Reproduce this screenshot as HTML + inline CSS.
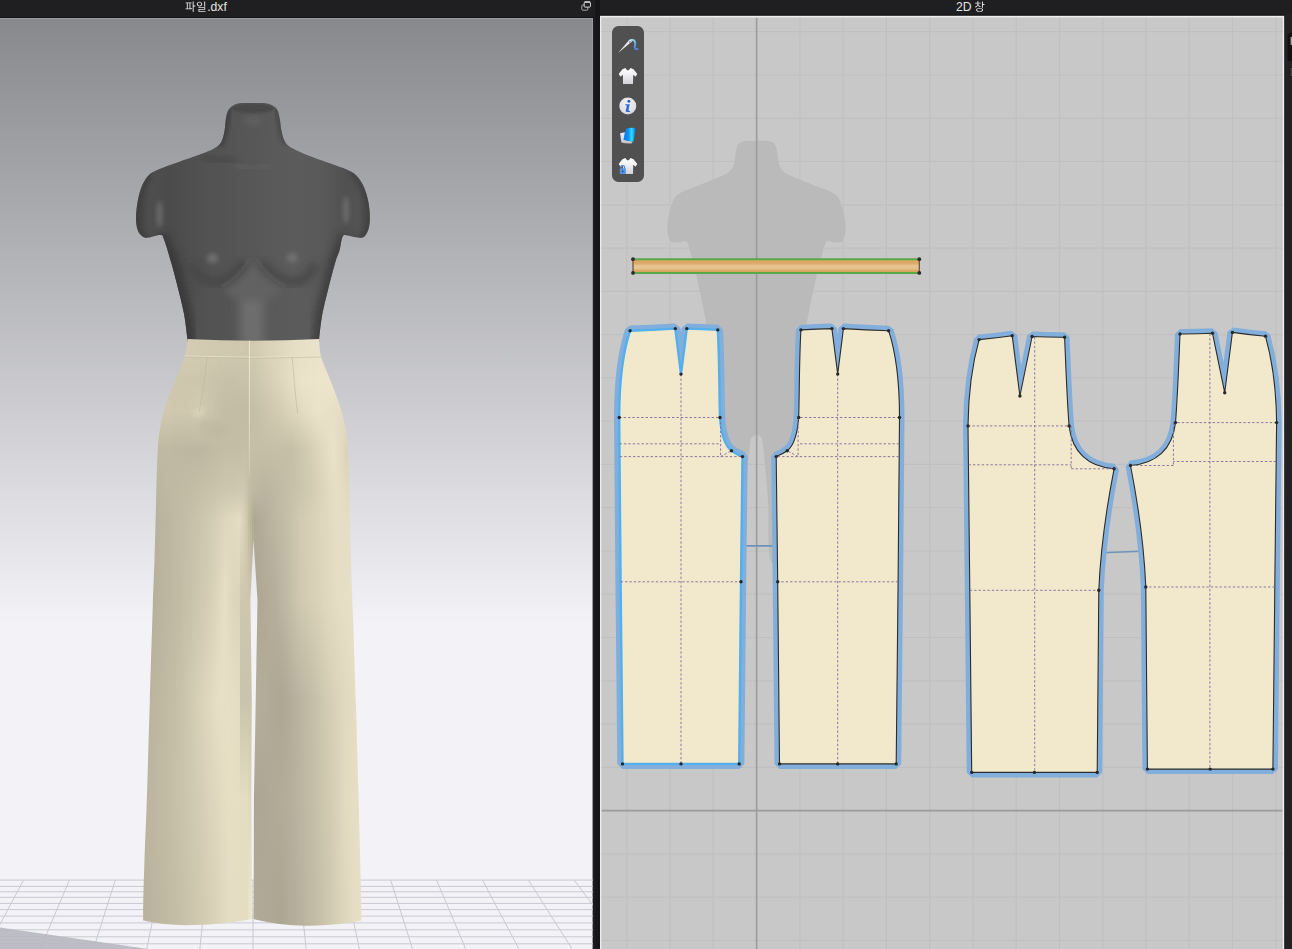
<!DOCTYPE html>
<html><head><meta charset="utf-8"><title>CLO</title>
<style>
html,body{margin:0;padding:0;background:#1f1f21;width:1292px;height:949px;overflow:hidden}
svg{position:absolute;left:0;top:0;display:block}
text{font-family:"Liberation Sans",sans-serif}
</style></head><body>
<svg width="1292" height="949" viewBox="0 0 1292 949">
<defs>
<linearGradient id="bg3d" x1="0" y1="18" x2="0" y2="949" gradientUnits="userSpaceOnUse">
<stop offset="0" stop-color="#88898d"/>
<stop offset="0.652" stop-color="#f2f2f7"/>
<stop offset="1" stop-color="#f2f2f7"/>
</linearGradient>
<clipPath id="clip3d"><rect x="0" y="18" width="593" height="931"/></clipPath>
<clipPath id="clip2d"><rect x="601.6" y="17.8" width="680.8" height="932"/></clipPath>
<filter id="b1" x="-20%" y="-20%" width="140%" height="140%"><feGaussianBlur stdDeviation="1"/></filter>
<filter id="b2" x="-30%" y="-30%" width="160%" height="160%"><feGaussianBlur stdDeviation="2"/></filter>
<filter id="b3" x="-30%" y="-30%" width="160%" height="160%"><feGaussianBlur stdDeviation="3.5"/></filter>
<filter id="b6" x="-50%" y="-50%" width="200%" height="200%"><feGaussianBlur stdDeviation="6"/></filter>
<filter id="b10" x="-50%" y="-50%" width="200%" height="200%"><feGaussianBlur stdDeviation="10"/></filter>
</defs>
<rect x="0" y="0" width="1292" height="949" fill="#1f1f21"/><rect x="0" y="17" width="594" height="1" fill="#121214"/><rect x="0" y="18" width="593" height="931" fill="url(#bg3d)"/><path d="M0,18.5H592.5V949" fill="none" stroke="#9b9ca1" stroke-width="1"/><rect x="599" y="14.6" width="686" height="1.2" fill="#121214"/><rect x="600" y="15.8" width="684.4" height="934" fill="#ededef"/><rect x="601" y="17.2" width="682" height="932" fill="#dadada"/><rect x="601.6" y="17.8" width="680.8" height="932" fill="#c8c8c8"/><path transform="translate(185.00,11.00) scale(0.01160,-0.01160)" d="M49 146C208 146 422 149 611 180L606 241C561 235 514 231 467 228V662H565V730H61V662H158V217L39 216ZM239 662H387V223L239 218ZM662 827V-78H745V396H893V465H745V827Z" fill="#e4e4e4"/><path transform="translate(196.00,11.00) scale(0.01160,-0.01160)" d="M304 794C169 794 70 711 70 593C70 475 169 393 304 393C439 393 537 475 537 593C537 711 439 794 304 794ZM304 725C392 725 457 671 457 593C457 515 392 461 304 461C216 461 151 515 151 593C151 671 216 725 304 725ZM708 827V364H791V827ZM209 1V-66H822V1H289V100H791V319H206V253H709V162H209Z" fill="#e4e4e4"/><text x="207.2" y="11" font-size="12.2" fill="#e4e4e4">.dxf</text><text x="956" y="11" font-size="12.2" fill="#e4e4e4">2D</text><path transform="translate(974.20,11.00) scale(0.01160,-0.01160)" d="M464 250C278 250 166 191 166 87C166 -16 278 -75 464 -75C649 -75 760 -16 760 87C760 191 649 250 464 250ZM464 185C598 185 679 150 679 87C679 25 598 -11 464 -11C329 -11 248 25 248 87C248 150 329 185 464 185ZM276 831V717H75V650H276V632C276 510 185 402 51 360L92 295C198 331 280 406 318 503C358 417 437 350 540 318L579 384C446 423 358 522 358 632V650H558V717H359V831ZM669 827V273H752V524H885V593H752V827Z" fill="#e4e4e4"/><g fill="none" stroke-width="1"><rect x="581.8" y="5" width="6" height="5.2" rx="0.7" stroke="#a6a6a6"/><rect x="584.2" y="2.1" width="6.2" height="5" rx="0.7" fill="#1f1f21" stroke="#d6d6d6"/><path d="M584.6,2H590" stroke="#dadada" stroke-width="1.4"/></g><g clip-path="url(#clip3d)"><g stroke="#c9c9d1" stroke-width="1" fill="none"><path d="M0,880.1H593"/><path d="M0,886.4H593"/><path d="M0,891.8H593"/><path d="M0,897.3H593"/><path d="M0,903.4H593"/><path d="M0,909.6H593"/><path d="M0,916.1H593"/><path d="M0,922.9H593"/><path d="M0,929.8H593"/><path d="M0,936.8H593"/><path d="M0,943.8H593"/><path d="M-114.2,880.1L-177.7,955"/><path d="M-68.3,880.1L-123.8,955"/><path d="M-22.4,880.1L-70.0,955"/><path d="M23.5,880.1L-16.2,955"/><path d="M69.4,880.1L37.7,955"/><path d="M115.3,880.1L91.5,955"/><path d="M161.2,880.1L145.3,955"/><path d="M207.1,880.1L199.2,955"/><path d="M253.0,880.1L253.0,955"/><path d="M298.9,880.1L306.8,955"/><path d="M344.8,880.1L360.7,955"/><path d="M390.7,880.1L414.5,955"/><path d="M436.6,880.1L468.3,955"/><path d="M482.5,880.1L522.2,955"/><path d="M528.4,880.1L576.0,955"/><path d="M574.3,880.1L629.8,955"/><path d="M620.2,880.1L683.7,955"/></g><path d="M0,927.5L148.6,949L0,949Z" fill="#b9b9c1" opacity="0.93"/></g><g clip-path="url(#clip3d)"><clipPath id="torsoclip"><path d="M187.4,338.7C186.8,334.6 185.6,322.4 184.1,314.3C182.6,306.2 180.6,298.6 178.4,289.9C176.2,281.2 173.5,270.6 171.1,262.3C168.7,254.0 166.0,244.7 164.2,240.1C162.4,235.5 163.2,235.4 160.5,235.0C157.8,234.6 150.9,237.4 147.8,237.6C144.7,237.8 143.6,237.2 141.9,235.9C140.2,234.6 138.7,232.9 137.7,230.0C136.7,227.1 136.0,223.0 136.0,218.2C136.0,213.4 136.7,206.7 137.7,201.3C138.7,196.0 140.1,190.4 141.9,186.1C143.7,181.8 145.9,178.0 148.7,175.2C151.5,172.4 154.0,171.4 158.8,169.3C163.6,167.2 170.3,165.0 177.3,162.5C184.3,160.0 194.7,156.5 200.9,154.1C207.1,151.7 211.0,150.2 214.4,148.2C217.8,146.2 219.5,145.2 221.2,142.3C222.9,139.4 223.8,134.7 224.6,130.5C225.4,126.3 225.4,120.7 226.2,117.0C227.0,113.3 227.6,110.8 229.6,108.5C231.6,106.2 234.2,104.4 238.0,103.5C241.8,102.6 247.7,103.0 252.5,103.0C257.4,103.0 263.1,102.6 267.1,103.5C271.1,104.4 274.3,106.0 276.4,108.5C278.5,111.0 278.9,115.0 279.7,118.7C280.5,122.4 280.5,126.7 281.4,130.5C282.2,134.3 283.0,138.5 284.8,141.4C286.6,144.3 288.0,145.7 292.4,148.2C296.8,150.7 303.9,153.8 310.9,156.6C317.9,159.4 327.9,162.5 334.6,165.0C341.4,167.5 347.0,169.1 351.4,171.8C355.8,174.5 358.2,177.3 360.7,181.1C363.2,184.9 365.1,189.5 366.6,194.6C368.1,199.7 369.2,206.1 369.6,211.4C370.0,216.7 369.9,222.5 369.1,226.6C368.3,230.7 366.7,234.1 364.9,235.9C363.1,237.7 361.0,237.7 358.2,237.6C355.4,237.5 350.6,235.6 348.0,235.4C345.4,235.2 344.0,234.3 342.6,236.7C341.2,239.1 340.8,245.7 339.6,250.0C338.4,254.3 337.2,255.7 335.3,262.3C333.4,268.9 330.2,281.2 328.0,289.9C325.8,298.6 323.8,306.2 322.3,314.3C320.8,322.4 319.6,334.6 319.1,338.7L319.1,342 L187.4,342Z"/></clipPath><linearGradient id="torsog" x1="136" y1="0" x2="370" y2="0" gradientUnits="userSpaceOnUse"><stop offset="0" stop-color="#424242"/><stop offset="0.06" stop-color="#4e4e4e"/><stop offset="0.14" stop-color="#4b4b4b"/><stop offset="0.3" stop-color="#525252"/><stop offset="0.5" stop-color="#575757"/><stop offset="0.68" stop-color="#5c5c5c"/><stop offset="0.8" stop-color="#595959"/><stop offset="0.9" stop-color="#505050"/><stop offset="0.95" stop-color="#535353"/><stop offset="1" stop-color="#444444"/></linearGradient><path d="M187.4,338.7C186.8,334.6 185.6,322.4 184.1,314.3C182.6,306.2 180.6,298.6 178.4,289.9C176.2,281.2 173.5,270.6 171.1,262.3C168.7,254.0 166.0,244.7 164.2,240.1C162.4,235.5 163.2,235.4 160.5,235.0C157.8,234.6 150.9,237.4 147.8,237.6C144.7,237.8 143.6,237.2 141.9,235.9C140.2,234.6 138.7,232.9 137.7,230.0C136.7,227.1 136.0,223.0 136.0,218.2C136.0,213.4 136.7,206.7 137.7,201.3C138.7,196.0 140.1,190.4 141.9,186.1C143.7,181.8 145.9,178.0 148.7,175.2C151.5,172.4 154.0,171.4 158.8,169.3C163.6,167.2 170.3,165.0 177.3,162.5C184.3,160.0 194.7,156.5 200.9,154.1C207.1,151.7 211.0,150.2 214.4,148.2C217.8,146.2 219.5,145.2 221.2,142.3C222.9,139.4 223.8,134.7 224.6,130.5C225.4,126.3 225.4,120.7 226.2,117.0C227.0,113.3 227.6,110.8 229.6,108.5C231.6,106.2 234.2,104.4 238.0,103.5C241.8,102.6 247.7,103.0 252.5,103.0C257.4,103.0 263.1,102.6 267.1,103.5C271.1,104.4 274.3,106.0 276.4,108.5C278.5,111.0 278.9,115.0 279.7,118.7C280.5,122.4 280.5,126.7 281.4,130.5C282.2,134.3 283.0,138.5 284.8,141.4C286.6,144.3 288.0,145.7 292.4,148.2C296.8,150.7 303.9,153.8 310.9,156.6C317.9,159.4 327.9,162.5 334.6,165.0C341.4,167.5 347.0,169.1 351.4,171.8C355.8,174.5 358.2,177.3 360.7,181.1C363.2,184.9 365.1,189.5 366.6,194.6C368.1,199.7 369.2,206.1 369.6,211.4C370.0,216.7 369.9,222.5 369.1,226.6C368.3,230.7 366.7,234.1 364.9,235.9C363.1,237.7 361.0,237.7 358.2,237.6C355.4,237.5 350.6,235.6 348.0,235.4C345.4,235.2 344.0,234.3 342.6,236.7C341.2,239.1 340.8,245.7 339.6,250.0C338.4,254.3 337.2,255.7 335.3,262.3C333.4,268.9 330.2,281.2 328.0,289.9C325.8,298.6 323.8,306.2 322.3,314.3C320.8,322.4 319.6,334.6 319.1,338.7L319.1,342 L187.4,342Z" fill="url(#torsog)"/><g clip-path="url(#torsoclip)"><path d="M160,236 L171,262 L178.4,290 L184,314 L187.4,345" stroke="#383838" stroke-width="16" fill="none" filter="url(#b3)" opacity="0.85"/><path d="M346,236 L335.3,262 L328,290 L322.3,314 L319,345" stroke="#3c3c3c" stroke-width="14" fill="none" filter="url(#b3)" opacity="0.85"/><path d="M150,174 Q136,196 136,220 Q138,238 150,238" stroke="#3e3e3e" stroke-width="5" fill="none" filter="url(#b2)" opacity="0.8"/><path d="M352,172 Q369,196 370,214 Q369,238 356,238" stroke="#404040" stroke-width="5" fill="none" filter="url(#b2)" opacity="0.8"/><ellipse cx="253" cy="108.5" rx="21" ry="5" fill="#484848" filter="url(#b1)"/><path d="M229,108 L225,132 L220,146" stroke="#414141" stroke-width="6" fill="none" filter="url(#b2)"/><path d="M277,108 L281,132 L286,144" stroke="#474747" stroke-width="5" fill="none" filter="url(#b2)"/><ellipse cx="253" cy="121" rx="9" ry="5" fill="#626262" filter="url(#b3)" opacity="0.9"/><path d="M203,156 Q218,162 236,161" stroke="#474747" stroke-width="6" fill="none" filter="url(#b3)" opacity="0.8"/><path d="M236,166 Q253,170 272,165" stroke="#636363" stroke-width="2.6" fill="none" filter="url(#b2)"/><ellipse cx="159.5" cy="214" rx="3.2" ry="13" fill="#686868" filter="url(#b2)"/><ellipse cx="346" cy="210" rx="3.2" ry="14" fill="#6a6a6a" filter="url(#b2)"/><path d="M253,262 L270,280 L283,290 L268,300 L266,350 L238,350 L237,300 L224,290 L238,280Z" fill="#626262" filter="url(#b3)"/><rect x="243" y="300" width="18" height="50" fill="#6d6d6d" filter="url(#b3)"/><path d="M190,264 Q203,286 221,281 Q236,275 244,262" stroke="#474747" stroke-width="9" fill="none" filter="url(#b3)" opacity="0.95"/><path d="M316,264 Q304,286 287,281 Q271,275 262,262" stroke="#484848" stroke-width="9" fill="none" filter="url(#b3)" opacity="0.95"/><path d="M222,286 Q240,277 250,258" stroke="#646464" stroke-width="1.5" fill="none" filter="url(#b1)" opacity="0.9"/><path d="M286,286 Q268,278 256,258" stroke="#606060" stroke-width="1.5" fill="none" filter="url(#b1)" opacity="0.9"/><ellipse cx="212.6" cy="258.2" rx="5.5" ry="5" fill="#6e6e6e" filter="url(#b2)"/><ellipse cx="292.2" cy="257.8" rx="5.5" ry="5" fill="#707070" filter="url(#b2)"/></g><clipPath id="pantclip"><path d="M187.5,339.0C187.1,341.8 186.5,350.0 184.8,356.0C183.2,362.0 180.0,368.7 177.6,374.8C175.2,380.9 172.8,386.4 170.4,392.7C168.0,399.0 165.2,404.9 163.3,412.4C161.4,419.9 159.9,428.6 158.8,437.5C157.8,446.4 157.4,455.7 157.0,466.1C156.6,476.5 156.5,484.4 156.1,500.0C155.7,515.6 155.1,542.3 154.5,560.0C153.9,577.7 153.6,582.5 152.8,606.0C152.0,629.5 150.8,668.7 149.8,701.0C148.8,733.3 147.7,773.5 146.8,800.0C145.9,826.5 145.1,842.5 144.5,860.0C143.9,877.5 143.4,894.9 143.2,905.0C143.0,915.1 143.2,918.0 143.2,920.6Q168,926 194.4,925 Q225,924.5 252.3,919 L252.3,919 L252,901 L251.3,800 L251.8,701 L250.4,600 L253.4,539.4L257.5,600 L255.7,701 L253.9,800 L253.6,901 L253.4,919Q280,925.5 305.7,925.7 Q337,926 361.3,920.6C361.3,918.0 361.5,915.1 361.3,905.0C361.1,894.9 360.6,877.5 360.2,860.0C359.8,842.5 359.3,826.5 358.6,800.0C357.9,773.5 356.8,733.3 355.8,701.0C354.8,668.7 353.4,629.5 352.6,606.0C351.8,582.5 351.5,577.7 351.0,560.0C350.5,542.3 350.0,515.6 349.6,500.0C349.2,484.4 349.1,476.5 348.7,466.1C348.2,455.7 347.9,446.1 346.9,437.5C345.8,428.9 344.3,421.7 342.4,414.2C340.4,406.7 337.6,399.3 335.2,392.7C332.8,386.1 330.5,380.9 328.1,374.8C325.7,368.7 322.4,362.0 320.9,356.0C319.4,350.0 319.4,341.8 319.1,339.0Q253,342.5 187.5,339Z"/></clipPath><g clip-path="url(#pantclip)"><g shape-rendering="crispEdges"><linearGradient id="pc0" x1="0" y1="338" x2="0" y2="928" gradientUnits="userSpaceOnUse"><stop offset="0.000" stop-color="#d4cdb4"/><stop offset="0.024" stop-color="#d4cdb4"/><stop offset="0.071" stop-color="#cec7ae"/><stop offset="0.124" stop-color="#d0c9b0"/><stop offset="0.190" stop-color="#c0baa3"/><stop offset="0.258" stop-color="#bcb6a0"/><stop offset="0.308" stop-color="#b7b19c"/><stop offset="0.444" stop-color="#b5ae9a"/><stop offset="0.615" stop-color="#bab49e"/><stop offset="0.783" stop-color="#bbb49e"/><stop offset="0.954" stop-color="#b7b19b"/><stop offset="1.000" stop-color="#b7b19b"/></linearGradient><rect x="140" y="338" width="2" height="590" fill="url(#pc0)"/><linearGradient id="pc1" x1="0" y1="338" x2="0" y2="928" gradientUnits="userSpaceOnUse"><stop offset="0.000" stop-color="#d4cdb4"/><stop offset="0.024" stop-color="#d4cdb4"/><stop offset="0.071" stop-color="#cec7ae"/><stop offset="0.124" stop-color="#d0c9b0"/><stop offset="0.190" stop-color="#c0baa3"/><stop offset="0.258" stop-color="#bcb6a0"/><stop offset="0.308" stop-color="#b7b19c"/><stop offset="0.444" stop-color="#b5ae9a"/><stop offset="0.615" stop-color="#bab49e"/><stop offset="0.783" stop-color="#bbb49e"/><stop offset="0.954" stop-color="#b8b29c"/><stop offset="1.000" stop-color="#b8b29c"/></linearGradient><rect x="142" y="338" width="2" height="590" fill="url(#pc1)"/><linearGradient id="pc2" x1="0" y1="338" x2="0" y2="928" gradientUnits="userSpaceOnUse"><stop offset="0.000" stop-color="#d4cdb4"/><stop offset="0.024" stop-color="#d4cdb4"/><stop offset="0.071" stop-color="#cec7ae"/><stop offset="0.124" stop-color="#d0c9b0"/><stop offset="0.190" stop-color="#c0baa3"/><stop offset="0.258" stop-color="#bcb6a0"/><stop offset="0.308" stop-color="#b7b19c"/><stop offset="0.444" stop-color="#b5ae9a"/><stop offset="0.615" stop-color="#bab49e"/><stop offset="0.783" stop-color="#bbb49e"/><stop offset="0.954" stop-color="#b9b39c"/><stop offset="1.000" stop-color="#b9b39c"/></linearGradient><rect x="144" y="338" width="2" height="590" fill="url(#pc2)"/><linearGradient id="pc3" x1="0" y1="338" x2="0" y2="928" gradientUnits="userSpaceOnUse"><stop offset="0.000" stop-color="#d4cdb4"/><stop offset="0.024" stop-color="#d4cdb4"/><stop offset="0.071" stop-color="#cec7ae"/><stop offset="0.124" stop-color="#d0c9b0"/><stop offset="0.190" stop-color="#c0baa3"/><stop offset="0.258" stop-color="#bcb6a0"/><stop offset="0.308" stop-color="#b7b19c"/><stop offset="0.444" stop-color="#b5ae9a"/><stop offset="0.615" stop-color="#bab49e"/><stop offset="0.783" stop-color="#bcb59f"/><stop offset="0.954" stop-color="#b9b39d"/><stop offset="1.000" stop-color="#b9b39d"/></linearGradient><rect x="146" y="338" width="2" height="590" fill="url(#pc3)"/><linearGradient id="pc4" x1="0" y1="338" x2="0" y2="928" gradientUnits="userSpaceOnUse"><stop offset="0.000" stop-color="#d4cdb4"/><stop offset="0.024" stop-color="#d4cdb4"/><stop offset="0.071" stop-color="#cec7ae"/><stop offset="0.124" stop-color="#d0c9b0"/><stop offset="0.190" stop-color="#c0baa3"/><stop offset="0.258" stop-color="#bcb6a0"/><stop offset="0.308" stop-color="#b7b19c"/><stop offset="0.444" stop-color="#b5ae9a"/><stop offset="0.615" stop-color="#bab49e"/><stop offset="0.783" stop-color="#bcb69f"/><stop offset="0.954" stop-color="#bab49e"/><stop offset="1.000" stop-color="#bab49e"/></linearGradient><rect x="148" y="338" width="2" height="590" fill="url(#pc4)"/><linearGradient id="pc5" x1="0" y1="338" x2="0" y2="928" gradientUnits="userSpaceOnUse"><stop offset="0.000" stop-color="#d4cdb4"/><stop offset="0.024" stop-color="#d4cdb4"/><stop offset="0.071" stop-color="#cec7ae"/><stop offset="0.124" stop-color="#d0c9b0"/><stop offset="0.190" stop-color="#c0baa3"/><stop offset="0.258" stop-color="#bcb6a0"/><stop offset="0.308" stop-color="#b7b19c"/><stop offset="0.444" stop-color="#b5ae9a"/><stop offset="0.615" stop-color="#bbb59f"/><stop offset="0.783" stop-color="#bdb6a0"/><stop offset="0.954" stop-color="#bbb59e"/><stop offset="1.000" stop-color="#bbb59e"/></linearGradient><rect x="150" y="338" width="2" height="590" fill="url(#pc5)"/><linearGradient id="pc6" x1="0" y1="338" x2="0" y2="928" gradientUnits="userSpaceOnUse"><stop offset="0.000" stop-color="#d4cdb4"/><stop offset="0.024" stop-color="#d4cdb4"/><stop offset="0.071" stop-color="#cec7ae"/><stop offset="0.124" stop-color="#d0c9b0"/><stop offset="0.190" stop-color="#c0baa3"/><stop offset="0.258" stop-color="#bcb6a0"/><stop offset="0.308" stop-color="#b7b19c"/><stop offset="0.444" stop-color="#b6af9b"/><stop offset="0.615" stop-color="#bcb6a0"/><stop offset="0.783" stop-color="#beb7a1"/><stop offset="0.954" stop-color="#bcb59f"/><stop offset="1.000" stop-color="#bcb59f"/></linearGradient><rect x="152" y="338" width="2" height="590" fill="url(#pc6)"/><linearGradient id="pc7" x1="0" y1="338" x2="0" y2="928" gradientUnits="userSpaceOnUse"><stop offset="0.000" stop-color="#d4cdb4"/><stop offset="0.024" stop-color="#d4cdb4"/><stop offset="0.071" stop-color="#cec7ae"/><stop offset="0.124" stop-color="#d0c9b0"/><stop offset="0.190" stop-color="#c0baa3"/><stop offset="0.258" stop-color="#bcb6a0"/><stop offset="0.308" stop-color="#b7b19c"/><stop offset="0.444" stop-color="#b7b09c"/><stop offset="0.615" stop-color="#bdb7a0"/><stop offset="0.783" stop-color="#bfb8a1"/><stop offset="0.954" stop-color="#bcb6a0"/><stop offset="1.000" stop-color="#bcb6a0"/></linearGradient><rect x="154" y="338" width="2" height="590" fill="url(#pc7)"/><linearGradient id="pc8" x1="0" y1="338" x2="0" y2="928" gradientUnits="userSpaceOnUse"><stop offset="0.000" stop-color="#d4cdb4"/><stop offset="0.024" stop-color="#d4cdb4"/><stop offset="0.071" stop-color="#cec7ae"/><stop offset="0.124" stop-color="#d0c9b0"/><stop offset="0.190" stop-color="#c0baa3"/><stop offset="0.258" stop-color="#bcb6a0"/><stop offset="0.308" stop-color="#b8b29d"/><stop offset="0.444" stop-color="#b8b19c"/><stop offset="0.615" stop-color="#bdb7a1"/><stop offset="0.783" stop-color="#bfb8a2"/><stop offset="0.954" stop-color="#bdb7a0"/><stop offset="1.000" stop-color="#bdb7a0"/></linearGradient><rect x="156" y="338" width="2" height="590" fill="url(#pc8)"/><linearGradient id="pc9" x1="0" y1="338" x2="0" y2="928" gradientUnits="userSpaceOnUse"><stop offset="0.000" stop-color="#d4cdb4"/><stop offset="0.024" stop-color="#d4cdb4"/><stop offset="0.071" stop-color="#cec7ae"/><stop offset="0.124" stop-color="#d0c9b0"/><stop offset="0.190" stop-color="#bfb9a2"/><stop offset="0.258" stop-color="#bcb6a0"/><stop offset="0.308" stop-color="#b9b39e"/><stop offset="0.444" stop-color="#b9b29d"/><stop offset="0.615" stop-color="#beb8a1"/><stop offset="0.783" stop-color="#c0b9a2"/><stop offset="0.954" stop-color="#beb7a1"/><stop offset="1.000" stop-color="#beb7a1"/></linearGradient><rect x="158" y="338" width="2" height="590" fill="url(#pc9)"/><linearGradient id="pc10" x1="0" y1="338" x2="0" y2="928" gradientUnits="userSpaceOnUse"><stop offset="0.000" stop-color="#d4cdb4"/><stop offset="0.024" stop-color="#d4cdb4"/><stop offset="0.071" stop-color="#cec7ae"/><stop offset="0.124" stop-color="#d0c9b0"/><stop offset="0.190" stop-color="#bfb9a2"/><stop offset="0.258" stop-color="#bdb7a1"/><stop offset="0.308" stop-color="#bab49e"/><stop offset="0.444" stop-color="#bab39e"/><stop offset="0.615" stop-color="#bfb9a2"/><stop offset="0.783" stop-color="#c1baa3"/><stop offset="0.954" stop-color="#bfb8a1"/><stop offset="1.000" stop-color="#bfb8a1"/></linearGradient><rect x="160" y="338" width="2" height="590" fill="url(#pc10)"/><linearGradient id="pc11" x1="0" y1="338" x2="0" y2="928" gradientUnits="userSpaceOnUse"><stop offset="0.000" stop-color="#d4cdb4"/><stop offset="0.024" stop-color="#d4cdb4"/><stop offset="0.071" stop-color="#cec7ae"/><stop offset="0.124" stop-color="#d0c9b0"/><stop offset="0.190" stop-color="#bfb9a2"/><stop offset="0.258" stop-color="#bdb7a1"/><stop offset="0.308" stop-color="#bbb49f"/><stop offset="0.444" stop-color="#bbb49f"/><stop offset="0.615" stop-color="#bfb9a2"/><stop offset="0.783" stop-color="#c2bba4"/><stop offset="0.954" stop-color="#bfb9a2"/><stop offset="1.000" stop-color="#bfb9a2"/></linearGradient><rect x="162" y="338" width="2" height="590" fill="url(#pc11)"/><linearGradient id="pc12" x1="0" y1="338" x2="0" y2="928" gradientUnits="userSpaceOnUse"><stop offset="0.000" stop-color="#d4cdb4"/><stop offset="0.024" stop-color="#d4cdb4"/><stop offset="0.071" stop-color="#cec7ae"/><stop offset="0.124" stop-color="#d0c9b0"/><stop offset="0.190" stop-color="#bfb9a2"/><stop offset="0.258" stop-color="#beb7a1"/><stop offset="0.308" stop-color="#bbb5a0"/><stop offset="0.444" stop-color="#bcb59f"/><stop offset="0.615" stop-color="#c0baa3"/><stop offset="0.783" stop-color="#c2bba4"/><stop offset="0.954" stop-color="#c0b9a3"/><stop offset="1.000" stop-color="#c0b9a3"/></linearGradient><rect x="164" y="338" width="2" height="590" fill="url(#pc12)"/><linearGradient id="pc13" x1="0" y1="338" x2="0" y2="928" gradientUnits="userSpaceOnUse"><stop offset="0.000" stop-color="#d4cdb4"/><stop offset="0.024" stop-color="#d4cdb4"/><stop offset="0.071" stop-color="#cec7ae"/><stop offset="0.124" stop-color="#d0c9b0"/><stop offset="0.190" stop-color="#bfb9a2"/><stop offset="0.258" stop-color="#beb8a2"/><stop offset="0.308" stop-color="#bcb6a0"/><stop offset="0.444" stop-color="#bdb6a0"/><stop offset="0.615" stop-color="#c1bba3"/><stop offset="0.783" stop-color="#c3bca5"/><stop offset="0.954" stop-color="#c1baa3"/><stop offset="1.000" stop-color="#c1baa3"/></linearGradient><rect x="166" y="338" width="2" height="590" fill="url(#pc13)"/><linearGradient id="pc14" x1="0" y1="338" x2="0" y2="928" gradientUnits="userSpaceOnUse"><stop offset="0.000" stop-color="#d4cdb4"/><stop offset="0.024" stop-color="#d4cdb4"/><stop offset="0.071" stop-color="#cec7ae"/><stop offset="0.124" stop-color="#d0c9b0"/><stop offset="0.190" stop-color="#bfb9a2"/><stop offset="0.258" stop-color="#bfb8a2"/><stop offset="0.308" stop-color="#bdb7a1"/><stop offset="0.444" stop-color="#bdb6a1"/><stop offset="0.615" stop-color="#c2bca4"/><stop offset="0.783" stop-color="#c4bda6"/><stop offset="0.954" stop-color="#c2bba4"/><stop offset="1.000" stop-color="#c2bba4"/></linearGradient><rect x="168" y="338" width="2" height="590" fill="url(#pc14)"/><linearGradient id="pc15" x1="0" y1="338" x2="0" y2="928" gradientUnits="userSpaceOnUse"><stop offset="0.000" stop-color="#d4cdb4"/><stop offset="0.024" stop-color="#d4cdb4"/><stop offset="0.071" stop-color="#cec7ae"/><stop offset="0.124" stop-color="#d0c9b0"/><stop offset="0.190" stop-color="#bfb9a2"/><stop offset="0.258" stop-color="#bfb9a2"/><stop offset="0.308" stop-color="#beb7a1"/><stop offset="0.444" stop-color="#beb7a2"/><stop offset="0.615" stop-color="#c3bda5"/><stop offset="0.783" stop-color="#c5bea7"/><stop offset="0.954" stop-color="#c2bca5"/><stop offset="1.000" stop-color="#c2bca5"/></linearGradient><rect x="170" y="338" width="2" height="590" fill="url(#pc15)"/><linearGradient id="pc16" x1="0" y1="338" x2="0" y2="928" gradientUnits="userSpaceOnUse"><stop offset="0.000" stop-color="#d4cdb4"/><stop offset="0.024" stop-color="#d4cdb4"/><stop offset="0.071" stop-color="#cec7ae"/><stop offset="0.124" stop-color="#cfc8af"/><stop offset="0.190" stop-color="#beb8a2"/><stop offset="0.258" stop-color="#bfb9a2"/><stop offset="0.308" stop-color="#bfb8a2"/><stop offset="0.444" stop-color="#bfb8a2"/><stop offset="0.615" stop-color="#c3bda6"/><stop offset="0.783" stop-color="#c6bfa8"/><stop offset="0.954" stop-color="#c3bca6"/><stop offset="1.000" stop-color="#c3bca6"/></linearGradient><rect x="172" y="338" width="2" height="590" fill="url(#pc16)"/><linearGradient id="pc17" x1="0" y1="338" x2="0" y2="928" gradientUnits="userSpaceOnUse"><stop offset="0.000" stop-color="#d4cdb4"/><stop offset="0.024" stop-color="#d4cdb4"/><stop offset="0.071" stop-color="#cec7ae"/><stop offset="0.124" stop-color="#cfc8af"/><stop offset="0.190" stop-color="#beb8a2"/><stop offset="0.258" stop-color="#c0b9a3"/><stop offset="0.308" stop-color="#bfb9a3"/><stop offset="0.444" stop-color="#c0b9a3"/><stop offset="0.615" stop-color="#c4bea6"/><stop offset="0.783" stop-color="#c7c0a9"/><stop offset="0.954" stop-color="#c4bda6"/><stop offset="1.000" stop-color="#c4bda6"/></linearGradient><rect x="174" y="338" width="2" height="590" fill="url(#pc17)"/><linearGradient id="pc18" x1="0" y1="338" x2="0" y2="928" gradientUnits="userSpaceOnUse"><stop offset="0.000" stop-color="#d4cdb4"/><stop offset="0.024" stop-color="#d4cdb4"/><stop offset="0.071" stop-color="#cec7ae"/><stop offset="0.124" stop-color="#cfc8af"/><stop offset="0.190" stop-color="#beb8a2"/><stop offset="0.258" stop-color="#c0baa3"/><stop offset="0.308" stop-color="#c0baa3"/><stop offset="0.444" stop-color="#c1baa4"/><stop offset="0.615" stop-color="#c6c0a7"/><stop offset="0.783" stop-color="#c8c1aa"/><stop offset="0.954" stop-color="#c5bea7"/><stop offset="1.000" stop-color="#c5bea7"/></linearGradient><rect x="176" y="338" width="2" height="590" fill="url(#pc18)"/><linearGradient id="pc19" x1="0" y1="338" x2="0" y2="928" gradientUnits="userSpaceOnUse"><stop offset="0.000" stop-color="#d4cdb4"/><stop offset="0.024" stop-color="#d4cdb4"/><stop offset="0.071" stop-color="#cec7ae"/><stop offset="0.124" stop-color="#cfc8af"/><stop offset="0.190" stop-color="#beb8a2"/><stop offset="0.258" stop-color="#c1baa3"/><stop offset="0.308" stop-color="#c1baa4"/><stop offset="0.444" stop-color="#c2bba4"/><stop offset="0.615" stop-color="#c7c1a9"/><stop offset="0.783" stop-color="#c9c2aa"/><stop offset="0.954" stop-color="#c6bfa8"/><stop offset="1.000" stop-color="#c6bfa8"/></linearGradient><rect x="178" y="338" width="2" height="590" fill="url(#pc19)"/><linearGradient id="pc20" x1="0" y1="338" x2="0" y2="928" gradientUnits="userSpaceOnUse"><stop offset="0.000" stop-color="#d4cdb4"/><stop offset="0.024" stop-color="#d4cdb4"/><stop offset="0.071" stop-color="#cec7ae"/><stop offset="0.124" stop-color="#cfc8af"/><stop offset="0.190" stop-color="#beb8a1"/><stop offset="0.258" stop-color="#c1baa4"/><stop offset="0.308" stop-color="#c2bba5"/><stop offset="0.444" stop-color="#c3bca5"/><stop offset="0.615" stop-color="#c9c2aa"/><stop offset="0.783" stop-color="#cac3ab"/><stop offset="0.954" stop-color="#c7c0a9"/><stop offset="1.000" stop-color="#c7c0a9"/></linearGradient><rect x="180" y="338" width="2" height="590" fill="url(#pc20)"/><linearGradient id="pc21" x1="0" y1="338" x2="0" y2="928" gradientUnits="userSpaceOnUse"><stop offset="0.000" stop-color="#d4cdb4"/><stop offset="0.024" stop-color="#d4cdb4"/><stop offset="0.071" stop-color="#cdc7ae"/><stop offset="0.124" stop-color="#cec7ae"/><stop offset="0.190" stop-color="#beb8a1"/><stop offset="0.258" stop-color="#c1bba4"/><stop offset="0.308" stop-color="#c3bca5"/><stop offset="0.444" stop-color="#c5bea6"/><stop offset="0.615" stop-color="#cac4ac"/><stop offset="0.783" stop-color="#cbc4ac"/><stop offset="0.954" stop-color="#c8c1aa"/><stop offset="1.000" stop-color="#c8c1aa"/></linearGradient><rect x="182" y="338" width="2" height="590" fill="url(#pc21)"/><linearGradient id="pc22" x1="0" y1="338" x2="0" y2="928" gradientUnits="userSpaceOnUse"><stop offset="0.000" stop-color="#d4cdb4"/><stop offset="0.024" stop-color="#d4cdb4"/><stop offset="0.071" stop-color="#cdc7ae"/><stop offset="0.124" stop-color="#cfc8af"/><stop offset="0.190" stop-color="#beb8a1"/><stop offset="0.258" stop-color="#c2bba4"/><stop offset="0.308" stop-color="#c4bda6"/><stop offset="0.444" stop-color="#c6bfa7"/><stop offset="0.615" stop-color="#ccc5ad"/><stop offset="0.783" stop-color="#ccc5ad"/><stop offset="0.954" stop-color="#c9c2aa"/><stop offset="1.000" stop-color="#c9c2aa"/></linearGradient><rect x="184" y="338" width="2" height="590" fill="url(#pc22)"/><linearGradient id="pc23" x1="0" y1="338" x2="0" y2="928" gradientUnits="userSpaceOnUse"><stop offset="0.000" stop-color="#d4cdb4"/><stop offset="0.024" stop-color="#d4cdb4"/><stop offset="0.071" stop-color="#cdc6ad"/><stop offset="0.124" stop-color="#cfc8af"/><stop offset="0.190" stop-color="#bdb7a1"/><stop offset="0.258" stop-color="#c2bca5"/><stop offset="0.308" stop-color="#c5bea7"/><stop offset="0.444" stop-color="#c7c0a8"/><stop offset="0.615" stop-color="#cdc7ae"/><stop offset="0.783" stop-color="#cdc6ae"/><stop offset="0.954" stop-color="#cac3ab"/><stop offset="1.000" stop-color="#cac3ab"/></linearGradient><rect x="186" y="338" width="2" height="590" fill="url(#pc23)"/><linearGradient id="pc24" x1="0" y1="338" x2="0" y2="928" gradientUnits="userSpaceOnUse"><stop offset="0.000" stop-color="#d4cdb4"/><stop offset="0.024" stop-color="#d4cdb4"/><stop offset="0.071" stop-color="#cdc6ad"/><stop offset="0.124" stop-color="#d0c9b0"/><stop offset="0.190" stop-color="#bdb7a1"/><stop offset="0.258" stop-color="#c3bca5"/><stop offset="0.308" stop-color="#c6bfa8"/><stop offset="0.444" stop-color="#c8c1a9"/><stop offset="0.615" stop-color="#cfc8b0"/><stop offset="0.783" stop-color="#cec7af"/><stop offset="0.954" stop-color="#cbc4ac"/><stop offset="1.000" stop-color="#cbc4ac"/></linearGradient><rect x="188" y="338" width="2" height="590" fill="url(#pc24)"/><linearGradient id="pc25" x1="0" y1="338" x2="0" y2="928" gradientUnits="userSpaceOnUse"><stop offset="0.000" stop-color="#d3ccb3"/><stop offset="0.024" stop-color="#d3ccb3"/><stop offset="0.071" stop-color="#cdc6ad"/><stop offset="0.124" stop-color="#d0c9b0"/><stop offset="0.190" stop-color="#bdb7a1"/><stop offset="0.258" stop-color="#c3bca5"/><stop offset="0.308" stop-color="#c7c0a9"/><stop offset="0.444" stop-color="#c9c2aa"/><stop offset="0.615" stop-color="#d1cab1"/><stop offset="0.783" stop-color="#cfc8b0"/><stop offset="0.954" stop-color="#ccc5ad"/><stop offset="1.000" stop-color="#ccc5ad"/></linearGradient><rect x="190" y="338" width="2" height="590" fill="url(#pc25)"/><linearGradient id="pc26" x1="0" y1="338" x2="0" y2="928" gradientUnits="userSpaceOnUse"><stop offset="0.000" stop-color="#d3ccb3"/><stop offset="0.024" stop-color="#d3ccb3"/><stop offset="0.071" stop-color="#ccc6ad"/><stop offset="0.124" stop-color="#d1cab1"/><stop offset="0.190" stop-color="#bdb7a1"/><stop offset="0.258" stop-color="#c4bda6"/><stop offset="0.308" stop-color="#c8c1aa"/><stop offset="0.444" stop-color="#cac4ac"/><stop offset="0.615" stop-color="#d2cbb3"/><stop offset="0.783" stop-color="#d0c9b1"/><stop offset="0.954" stop-color="#cdc6ae"/><stop offset="1.000" stop-color="#cdc6ae"/></linearGradient><rect x="192" y="338" width="2" height="590" fill="url(#pc26)"/><linearGradient id="pc27" x1="0" y1="338" x2="0" y2="928" gradientUnits="userSpaceOnUse"><stop offset="0.000" stop-color="#d3ccb3"/><stop offset="0.024" stop-color="#d3ccb3"/><stop offset="0.071" stop-color="#ccc6ad"/><stop offset="0.124" stop-color="#d2cbb2"/><stop offset="0.190" stop-color="#bdb7a1"/><stop offset="0.258" stop-color="#c4bda6"/><stop offset="0.308" stop-color="#c9c2ab"/><stop offset="0.444" stop-color="#ccc5ad"/><stop offset="0.615" stop-color="#d4cdb4"/><stop offset="0.783" stop-color="#d1cab2"/><stop offset="0.954" stop-color="#cec7ae"/><stop offset="1.000" stop-color="#cec7ae"/></linearGradient><rect x="194" y="338" width="2" height="590" fill="url(#pc27)"/><linearGradient id="pc28" x1="0" y1="338" x2="0" y2="928" gradientUnits="userSpaceOnUse"><stop offset="0.000" stop-color="#d3ccb3"/><stop offset="0.024" stop-color="#d3ccb3"/><stop offset="0.071" stop-color="#ccc6ad"/><stop offset="0.124" stop-color="#d2cbb2"/><stop offset="0.190" stop-color="#bdb7a1"/><stop offset="0.258" stop-color="#c5bea7"/><stop offset="0.308" stop-color="#cac3ac"/><stop offset="0.444" stop-color="#cdc6ae"/><stop offset="0.615" stop-color="#d6cfb6"/><stop offset="0.783" stop-color="#d2cbb3"/><stop offset="0.954" stop-color="#cfc8af"/><stop offset="1.000" stop-color="#cfc8af"/></linearGradient><rect x="196" y="338" width="2" height="590" fill="url(#pc28)"/><linearGradient id="pc29" x1="0" y1="338" x2="0" y2="928" gradientUnits="userSpaceOnUse"><stop offset="0.000" stop-color="#d2cbb2"/><stop offset="0.024" stop-color="#d2cbb2"/><stop offset="0.071" stop-color="#ccc6ad"/><stop offset="0.124" stop-color="#d3ccb3"/><stop offset="0.190" stop-color="#bdb7a1"/><stop offset="0.258" stop-color="#c6bfa7"/><stop offset="0.308" stop-color="#cbc4ad"/><stop offset="0.444" stop-color="#cec7af"/><stop offset="0.615" stop-color="#d8d1b8"/><stop offset="0.783" stop-color="#d4cdb4"/><stop offset="0.954" stop-color="#d0c9b0"/><stop offset="1.000" stop-color="#d0c9b0"/></linearGradient><rect x="198" y="338" width="2" height="590" fill="url(#pc29)"/><linearGradient id="pc30" x1="0" y1="338" x2="0" y2="928" gradientUnits="userSpaceOnUse"><stop offset="0.000" stop-color="#d2cbb2"/><stop offset="0.024" stop-color="#d2cbb2"/><stop offset="0.071" stop-color="#cbc5ac"/><stop offset="0.124" stop-color="#d2cbb2"/><stop offset="0.190" stop-color="#bdb7a1"/><stop offset="0.258" stop-color="#c6bfa8"/><stop offset="0.308" stop-color="#ccc5ae"/><stop offset="0.444" stop-color="#d0c9b0"/><stop offset="0.615" stop-color="#d9d2b9"/><stop offset="0.783" stop-color="#d5ceb5"/><stop offset="0.954" stop-color="#d1cab1"/><stop offset="1.000" stop-color="#d1cab1"/></linearGradient><rect x="200" y="338" width="2" height="590" fill="url(#pc30)"/><linearGradient id="pc31" x1="0" y1="338" x2="0" y2="928" gradientUnits="userSpaceOnUse"><stop offset="0.000" stop-color="#d2cbb2"/><stop offset="0.024" stop-color="#d2cbb2"/><stop offset="0.071" stop-color="#cbc5ac"/><stop offset="0.124" stop-color="#d0c9b0"/><stop offset="0.190" stop-color="#bdb7a1"/><stop offset="0.258" stop-color="#c7c0a9"/><stop offset="0.308" stop-color="#cec7af"/><stop offset="0.444" stop-color="#d1cab1"/><stop offset="0.615" stop-color="#dbd4bb"/><stop offset="0.783" stop-color="#d6cfb7"/><stop offset="0.954" stop-color="#d2cbb2"/><stop offset="1.000" stop-color="#d2cbb2"/></linearGradient><rect x="202" y="338" width="2" height="590" fill="url(#pc31)"/><linearGradient id="pc32" x1="0" y1="338" x2="0" y2="928" gradientUnits="userSpaceOnUse"><stop offset="0.000" stop-color="#d2cbb2"/><stop offset="0.024" stop-color="#d2cbb2"/><stop offset="0.071" stop-color="#cbc5ac"/><stop offset="0.124" stop-color="#cfc8af"/><stop offset="0.190" stop-color="#beb8a2"/><stop offset="0.258" stop-color="#c7c0a9"/><stop offset="0.308" stop-color="#cfc8b0"/><stop offset="0.444" stop-color="#d2cbb3"/><stop offset="0.615" stop-color="#dcd5bc"/><stop offset="0.783" stop-color="#d8d1b8"/><stop offset="0.954" stop-color="#d3ccb3"/><stop offset="1.000" stop-color="#d3ccb3"/></linearGradient><rect x="204" y="338" width="2" height="590" fill="url(#pc32)"/><linearGradient id="pc33" x1="0" y1="338" x2="0" y2="928" gradientUnits="userSpaceOnUse"><stop offset="0.000" stop-color="#d2cbb2"/><stop offset="0.024" stop-color="#d2cbb2"/><stop offset="0.071" stop-color="#cbc5ac"/><stop offset="0.124" stop-color="#cdc7ae"/><stop offset="0.190" stop-color="#beb8a2"/><stop offset="0.258" stop-color="#c8c1aa"/><stop offset="0.308" stop-color="#d0c9b1"/><stop offset="0.444" stop-color="#d4cdb4"/><stop offset="0.615" stop-color="#ded7bd"/><stop offset="0.783" stop-color="#d9d2b9"/><stop offset="0.954" stop-color="#d4cdb4"/><stop offset="1.000" stop-color="#d4cdb4"/></linearGradient><rect x="206" y="338" width="2" height="590" fill="url(#pc33)"/><linearGradient id="pc34" x1="0" y1="338" x2="0" y2="928" gradientUnits="userSpaceOnUse"><stop offset="0.000" stop-color="#d1cab1"/><stop offset="0.024" stop-color="#d1cab1"/><stop offset="0.071" stop-color="#cac4ab"/><stop offset="0.124" stop-color="#ccc5ad"/><stop offset="0.190" stop-color="#bfb9a2"/><stop offset="0.258" stop-color="#c9c2aa"/><stop offset="0.308" stop-color="#d1cab2"/><stop offset="0.444" stop-color="#d5ceb6"/><stop offset="0.615" stop-color="#dfd8bf"/><stop offset="0.783" stop-color="#dad3ba"/><stop offset="0.954" stop-color="#d6cfb5"/><stop offset="1.000" stop-color="#d6cfb5"/></linearGradient><rect x="208" y="338" width="2" height="590" fill="url(#pc34)"/><linearGradient id="pc35" x1="0" y1="338" x2="0" y2="928" gradientUnits="userSpaceOnUse"><stop offset="0.000" stop-color="#d1cab1"/><stop offset="0.024" stop-color="#d1cab1"/><stop offset="0.071" stop-color="#cac4ab"/><stop offset="0.124" stop-color="#cac4ab"/><stop offset="0.190" stop-color="#c0baa3"/><stop offset="0.258" stop-color="#c9c2ab"/><stop offset="0.308" stop-color="#d2cbb3"/><stop offset="0.444" stop-color="#d7d0b7"/><stop offset="0.615" stop-color="#e1dac0"/><stop offset="0.783" stop-color="#dcd4bb"/><stop offset="0.954" stop-color="#d7d0b7"/><stop offset="1.000" stop-color="#d7d0b7"/></linearGradient><rect x="210" y="338" width="2" height="590" fill="url(#pc35)"/><linearGradient id="pc36" x1="0" y1="338" x2="0" y2="928" gradientUnits="userSpaceOnUse"><stop offset="0.000" stop-color="#d1cab1"/><stop offset="0.024" stop-color="#d1cab1"/><stop offset="0.071" stop-color="#c9c3ab"/><stop offset="0.124" stop-color="#c9c3aa"/><stop offset="0.190" stop-color="#c0baa3"/><stop offset="0.258" stop-color="#cac3ab"/><stop offset="0.308" stop-color="#d4cdb4"/><stop offset="0.444" stop-color="#d9d2b9"/><stop offset="0.615" stop-color="#e2dbc2"/><stop offset="0.783" stop-color="#ddd6bc"/><stop offset="0.954" stop-color="#d8d1b8"/><stop offset="1.000" stop-color="#d8d1b8"/></linearGradient><rect x="212" y="338" width="2" height="590" fill="url(#pc36)"/><linearGradient id="pc37" x1="0" y1="338" x2="0" y2="928" gradientUnits="userSpaceOnUse"><stop offset="0.000" stop-color="#d1cab1"/><stop offset="0.024" stop-color="#d1cab1"/><stop offset="0.071" stop-color="#c9c3ab"/><stop offset="0.124" stop-color="#c7c1a9"/><stop offset="0.190" stop-color="#c1bba3"/><stop offset="0.258" stop-color="#cac3ac"/><stop offset="0.308" stop-color="#d5ceb6"/><stop offset="0.444" stop-color="#dbd4bb"/><stop offset="0.615" stop-color="#e4ddc3"/><stop offset="0.783" stop-color="#ded7bd"/><stop offset="0.954" stop-color="#dad3b9"/><stop offset="1.000" stop-color="#dad3b9"/></linearGradient><rect x="214" y="338" width="2" height="590" fill="url(#pc37)"/><linearGradient id="pc38" x1="0" y1="338" x2="0" y2="928" gradientUnits="userSpaceOnUse"><stop offset="0.000" stop-color="#d1cab1"/><stop offset="0.024" stop-color="#d1cab1"/><stop offset="0.071" stop-color="#c9c3aa"/><stop offset="0.124" stop-color="#c6c0a8"/><stop offset="0.190" stop-color="#c1bba4"/><stop offset="0.258" stop-color="#cbc4ac"/><stop offset="0.308" stop-color="#d7d0b7"/><stop offset="0.444" stop-color="#ddd6bd"/><stop offset="0.615" stop-color="#e5dec4"/><stop offset="0.783" stop-color="#dfd8be"/><stop offset="0.954" stop-color="#dbd4bb"/><stop offset="1.000" stop-color="#dbd4bb"/></linearGradient><rect x="216" y="338" width="2" height="590" fill="url(#pc38)"/><linearGradient id="pc39" x1="0" y1="338" x2="0" y2="928" gradientUnits="userSpaceOnUse"><stop offset="0.000" stop-color="#d0c9b0"/><stop offset="0.024" stop-color="#d0c9b0"/><stop offset="0.071" stop-color="#c8c2aa"/><stop offset="0.124" stop-color="#c5bfa6"/><stop offset="0.190" stop-color="#c2bca4"/><stop offset="0.258" stop-color="#ccc5ad"/><stop offset="0.308" stop-color="#d8d1b9"/><stop offset="0.444" stop-color="#e0d9c0"/><stop offset="0.615" stop-color="#e6dfc5"/><stop offset="0.783" stop-color="#e0d9bf"/><stop offset="0.954" stop-color="#ddd6bc"/><stop offset="1.000" stop-color="#ddd6bc"/></linearGradient><rect x="218" y="338" width="2" height="590" fill="url(#pc39)"/><linearGradient id="pc40" x1="0" y1="338" x2="0" y2="928" gradientUnits="userSpaceOnUse"><stop offset="0.000" stop-color="#d0c9b0"/><stop offset="0.024" stop-color="#d0c9b0"/><stop offset="0.071" stop-color="#c8c2aa"/><stop offset="0.124" stop-color="#c4bea6"/><stop offset="0.190" stop-color="#c2bca5"/><stop offset="0.258" stop-color="#ccc5ad"/><stop offset="0.308" stop-color="#dad3ba"/><stop offset="0.444" stop-color="#e2dbc2"/><stop offset="0.615" stop-color="#e7e0c6"/><stop offset="0.783" stop-color="#e2dbc0"/><stop offset="0.954" stop-color="#ded7be"/><stop offset="1.000" stop-color="#ded7be"/></linearGradient><rect x="220" y="338" width="2" height="590" fill="url(#pc40)"/><linearGradient id="pc41" x1="0" y1="338" x2="0" y2="928" gradientUnits="userSpaceOnUse"><stop offset="0.000" stop-color="#d0c9b0"/><stop offset="0.024" stop-color="#d0c9b0"/><stop offset="0.071" stop-color="#c8c2a9"/><stop offset="0.124" stop-color="#c4bea6"/><stop offset="0.190" stop-color="#c3bda5"/><stop offset="0.258" stop-color="#cdc6ae"/><stop offset="0.308" stop-color="#dbd4bb"/><stop offset="0.444" stop-color="#e4ddc4"/><stop offset="0.615" stop-color="#e7e0c6"/><stop offset="0.783" stop-color="#e3dcc1"/><stop offset="0.954" stop-color="#e0d9bf"/><stop offset="1.000" stop-color="#e0d9bf"/></linearGradient><rect x="222" y="338" width="2" height="590" fill="url(#pc41)"/><linearGradient id="pc42" x1="0" y1="338" x2="0" y2="928" gradientUnits="userSpaceOnUse"><stop offset="0.000" stop-color="#d0c9b0"/><stop offset="0.024" stop-color="#d0c9b0"/><stop offset="0.071" stop-color="#c7c1a9"/><stop offset="0.124" stop-color="#c3bda5"/><stop offset="0.190" stop-color="#c4bea6"/><stop offset="0.258" stop-color="#cdc6ae"/><stop offset="0.308" stop-color="#ddd6bd"/><stop offset="0.444" stop-color="#e6dfc6"/><stop offset="0.615" stop-color="#e6dfc5"/><stop offset="0.783" stop-color="#e4ddc2"/><stop offset="0.954" stop-color="#e1dac0"/><stop offset="1.000" stop-color="#e1dac0"/></linearGradient><rect x="224" y="338" width="2" height="590" fill="url(#pc42)"/><linearGradient id="pc43" x1="0" y1="338" x2="0" y2="928" gradientUnits="userSpaceOnUse"><stop offset="0.000" stop-color="#d0c9b0"/><stop offset="0.024" stop-color="#d0c9b0"/><stop offset="0.071" stop-color="#c7c1a9"/><stop offset="0.124" stop-color="#c3bda5"/><stop offset="0.190" stop-color="#c4bea6"/><stop offset="0.258" stop-color="#cec7af"/><stop offset="0.308" stop-color="#ded7be"/><stop offset="0.444" stop-color="#e4ddc4"/><stop offset="0.615" stop-color="#e6dfc5"/><stop offset="0.783" stop-color="#e5dec3"/><stop offset="0.954" stop-color="#e3dcc2"/><stop offset="1.000" stop-color="#e3dcc2"/></linearGradient><rect x="226" y="338" width="2" height="590" fill="url(#pc43)"/><linearGradient id="pc44" x1="0" y1="338" x2="0" y2="928" gradientUnits="userSpaceOnUse"><stop offset="0.000" stop-color="#d0c9b0"/><stop offset="0.024" stop-color="#d0c9b0"/><stop offset="0.071" stop-color="#c7c1a9"/><stop offset="0.124" stop-color="#c3bda5"/><stop offset="0.190" stop-color="#c4bea6"/><stop offset="0.258" stop-color="#cec7af"/><stop offset="0.308" stop-color="#dfd8be"/><stop offset="0.444" stop-color="#e2dbc2"/><stop offset="0.615" stop-color="#e6dfc5"/><stop offset="0.783" stop-color="#e6dfc4"/><stop offset="0.954" stop-color="#e4ddc3"/><stop offset="1.000" stop-color="#e4ddc3"/></linearGradient><rect x="228" y="338" width="2" height="590" fill="url(#pc44)"/><linearGradient id="pc45" x1="0" y1="338" x2="0" y2="928" gradientUnits="userSpaceOnUse"><stop offset="0.000" stop-color="#d0c9b0"/><stop offset="0.024" stop-color="#d0c9b0"/><stop offset="0.071" stop-color="#c7c1a9"/><stop offset="0.124" stop-color="#c3bda5"/><stop offset="0.190" stop-color="#c4bea6"/><stop offset="0.258" stop-color="#cec7af"/><stop offset="0.308" stop-color="#e0d9bf"/><stop offset="0.444" stop-color="#dfd8bf"/><stop offset="0.615" stop-color="#e5dec4"/><stop offset="0.783" stop-color="#e6dfc4"/><stop offset="0.954" stop-color="#e4ddc3"/><stop offset="1.000" stop-color="#e4ddc3"/></linearGradient><rect x="230" y="338" width="2" height="590" fill="url(#pc45)"/><linearGradient id="pc46" x1="0" y1="338" x2="0" y2="928" gradientUnits="userSpaceOnUse"><stop offset="0.000" stop-color="#cfc8af"/><stop offset="0.024" stop-color="#cfc8af"/><stop offset="0.071" stop-color="#c7c1a9"/><stop offset="0.124" stop-color="#c2bca4"/><stop offset="0.190" stop-color="#c4bea6"/><stop offset="0.258" stop-color="#cec7af"/><stop offset="0.308" stop-color="#e1dac0"/><stop offset="0.444" stop-color="#ddd6bd"/><stop offset="0.615" stop-color="#e5dec4"/><stop offset="0.783" stop-color="#e6dfc4"/><stop offset="0.954" stop-color="#e4ddc3"/><stop offset="1.000" stop-color="#e4ddc3"/></linearGradient><rect x="232" y="338" width="2" height="590" fill="url(#pc46)"/><linearGradient id="pc47" x1="0" y1="338" x2="0" y2="928" gradientUnits="userSpaceOnUse"><stop offset="0.000" stop-color="#cfc8af"/><stop offset="0.024" stop-color="#cfc8af"/><stop offset="0.071" stop-color="#c7c1a9"/><stop offset="0.124" stop-color="#c2bca4"/><stop offset="0.190" stop-color="#c4bea6"/><stop offset="0.258" stop-color="#cec7af"/><stop offset="0.308" stop-color="#e2dbc1"/><stop offset="0.444" stop-color="#dcd5bc"/><stop offset="0.615" stop-color="#e5dec4"/><stop offset="0.783" stop-color="#e5dec3"/><stop offset="0.954" stop-color="#e4ddc3"/><stop offset="1.000" stop-color="#e4ddc3"/></linearGradient><rect x="234" y="338" width="2" height="590" fill="url(#pc47)"/><linearGradient id="pc48" x1="0" y1="338" x2="0" y2="928" gradientUnits="userSpaceOnUse"><stop offset="0.000" stop-color="#cfc8af"/><stop offset="0.024" stop-color="#cfc8af"/><stop offset="0.071" stop-color="#c7c1a9"/><stop offset="0.124" stop-color="#c2bca4"/><stop offset="0.190" stop-color="#c4bea6"/><stop offset="0.258" stop-color="#cfc8b0"/><stop offset="0.308" stop-color="#e3dcc2"/><stop offset="0.444" stop-color="#dcd5bb"/><stop offset="0.615" stop-color="#e4ddc3"/><stop offset="0.783" stop-color="#e5dec3"/><stop offset="0.954" stop-color="#e4ddc3"/><stop offset="1.000" stop-color="#e4ddc3"/></linearGradient><rect x="236" y="338" width="2" height="590" fill="url(#pc48)"/><linearGradient id="pc49" x1="0" y1="338" x2="0" y2="928" gradientUnits="userSpaceOnUse"><stop offset="0.000" stop-color="#cfc8af"/><stop offset="0.024" stop-color="#cfc8af"/><stop offset="0.071" stop-color="#c8c2aa"/><stop offset="0.124" stop-color="#c2bca4"/><stop offset="0.190" stop-color="#c4bea6"/><stop offset="0.258" stop-color="#cfc8b0"/><stop offset="0.308" stop-color="#e4ddc3"/><stop offset="0.444" stop-color="#dcd4ba"/><stop offset="0.615" stop-color="#e4ddc3"/><stop offset="0.783" stop-color="#e5dec3"/><stop offset="0.954" stop-color="#e4ddc2"/><stop offset="1.000" stop-color="#e4ddc2"/></linearGradient><rect x="238" y="338" width="2" height="590" fill="url(#pc49)"/><linearGradient id="pc50" x1="0" y1="338" x2="0" y2="928" gradientUnits="userSpaceOnUse"><stop offset="0.000" stop-color="#cfc8af"/><stop offset="0.024" stop-color="#cfc8af"/><stop offset="0.071" stop-color="#c8c2aa"/><stop offset="0.124" stop-color="#c2bca4"/><stop offset="0.190" stop-color="#c4bea6"/><stop offset="0.258" stop-color="#cfc8b0"/><stop offset="0.308" stop-color="#e1dac0"/><stop offset="0.444" stop-color="#cec7ae"/><stop offset="0.615" stop-color="#cac4ac"/><stop offset="0.783" stop-color="#e5dec3"/><stop offset="0.954" stop-color="#e4ddc2"/><stop offset="1.000" stop-color="#e4ddc2"/></linearGradient><rect x="240" y="338" width="2" height="590" fill="url(#pc50)"/><linearGradient id="pc51" x1="0" y1="338" x2="0" y2="928" gradientUnits="userSpaceOnUse"><stop offset="0.000" stop-color="#cfc8af"/><stop offset="0.024" stop-color="#cfc8af"/><stop offset="0.071" stop-color="#c8c2aa"/><stop offset="0.124" stop-color="#c1bba3"/><stop offset="0.190" stop-color="#c5bfa7"/><stop offset="0.258" stop-color="#cfc8b0"/><stop offset="0.308" stop-color="#dcd4bb"/><stop offset="0.444" stop-color="#cec7ae"/><stop offset="0.615" stop-color="#cac4ac"/><stop offset="0.783" stop-color="#e4ddc2"/><stop offset="0.954" stop-color="#e4ddc2"/><stop offset="1.000" stop-color="#e4ddc2"/></linearGradient><rect x="242" y="338" width="2" height="590" fill="url(#pc51)"/><linearGradient id="pc52" x1="0" y1="338" x2="0" y2="928" gradientUnits="userSpaceOnUse"><stop offset="0.000" stop-color="#cec7ae"/><stop offset="0.024" stop-color="#cec7ae"/><stop offset="0.071" stop-color="#c8c2aa"/><stop offset="0.124" stop-color="#c1bba3"/><stop offset="0.190" stop-color="#c5bfa7"/><stop offset="0.258" stop-color="#cdc6ae"/><stop offset="0.308" stop-color="#d6cfb6"/><stop offset="0.444" stop-color="#cec7ae"/><stop offset="0.615" stop-color="#cac4ac"/><stop offset="0.783" stop-color="#e4ddc2"/><stop offset="0.954" stop-color="#e4ddc2"/><stop offset="1.000" stop-color="#e4ddc2"/></linearGradient><rect x="244" y="338" width="2" height="590" fill="url(#pc52)"/><linearGradient id="pc53" x1="0" y1="338" x2="0" y2="928" gradientUnits="userSpaceOnUse"><stop offset="0.000" stop-color="#cec7ae"/><stop offset="0.024" stop-color="#cec7ae"/><stop offset="0.071" stop-color="#c8c2aa"/><stop offset="0.124" stop-color="#c1bba3"/><stop offset="0.190" stop-color="#c5bfa7"/><stop offset="0.258" stop-color="#c9c2ab"/><stop offset="0.308" stop-color="#cec7ae"/><stop offset="0.444" stop-color="#cec7ae"/><stop offset="0.615" stop-color="#cac4ac"/><stop offset="0.783" stop-color="#e4ddc2"/><stop offset="0.954" stop-color="#e4ddc2"/><stop offset="1.000" stop-color="#e4ddc2"/></linearGradient><rect x="246" y="338" width="2" height="590" fill="url(#pc53)"/><linearGradient id="pc54" x1="0" y1="338" x2="0" y2="928" gradientUnits="userSpaceOnUse"><stop offset="0.000" stop-color="#cfc8af"/><stop offset="0.024" stop-color="#cfc8af"/><stop offset="0.071" stop-color="#c9c3ab"/><stop offset="0.124" stop-color="#c2bca4"/><stop offset="0.190" stop-color="#c5bfa7"/><stop offset="0.258" stop-color="#c5bea7"/><stop offset="0.308" stop-color="#c3bca5"/><stop offset="0.444" stop-color="#cec7ae"/><stop offset="0.615" stop-color="#cac4ac"/><stop offset="0.783" stop-color="#e0d9bf"/><stop offset="0.954" stop-color="#e8e2c8"/><stop offset="1.000" stop-color="#e8e2c8"/></linearGradient><rect x="248" y="338" width="2" height="590" fill="url(#pc54)"/><linearGradient id="pc55" x1="0" y1="338" x2="0" y2="928" gradientUnits="userSpaceOnUse"><stop offset="0.000" stop-color="#d0c9b0"/><stop offset="0.024" stop-color="#d0c9b0"/><stop offset="0.071" stop-color="#cac4ac"/><stop offset="0.124" stop-color="#c3bda5"/><stop offset="0.190" stop-color="#c5bfa7"/><stop offset="0.258" stop-color="#c1baa3"/><stop offset="0.308" stop-color="#bab49e"/><stop offset="0.444" stop-color="#c9c2aa"/><stop offset="0.615" stop-color="#cac4ac"/><stop offset="0.783" stop-color="#ddd6bd"/><stop offset="0.954" stop-color="#ece6ce"/><stop offset="1.000" stop-color="#ece6ce"/></linearGradient><rect x="250" y="338" width="2" height="590" fill="url(#pc55)"/><linearGradient id="pc56" x1="0" y1="338" x2="0" y2="928" gradientUnits="userSpaceOnUse"><stop offset="0.000" stop-color="#d1cab1"/><stop offset="0.024" stop-color="#d1cab1"/><stop offset="0.071" stop-color="#cbc5ad"/><stop offset="0.124" stop-color="#c4bea6"/><stop offset="0.190" stop-color="#c5bfa7"/><stop offset="0.258" stop-color="#bfb8a2"/><stop offset="0.308" stop-color="#b1ab96"/><stop offset="0.444" stop-color="#beb8a1"/><stop offset="0.615" stop-color="#c1baa4"/><stop offset="0.783" stop-color="#bab39e"/><stop offset="0.954" stop-color="#c0baa4"/><stop offset="1.000" stop-color="#c0baa4"/></linearGradient><rect x="252" y="338" width="2" height="590" fill="url(#pc56)"/><linearGradient id="pc57" x1="0" y1="338" x2="0" y2="928" gradientUnits="userSpaceOnUse"><stop offset="0.000" stop-color="#d2cbb2"/><stop offset="0.024" stop-color="#d2cbb2"/><stop offset="0.071" stop-color="#ccc6ae"/><stop offset="0.124" stop-color="#c6bfa7"/><stop offset="0.190" stop-color="#c5bfa7"/><stop offset="0.258" stop-color="#beb7a1"/><stop offset="0.308" stop-color="#aea793"/><stop offset="0.444" stop-color="#b5af9a"/><stop offset="0.615" stop-color="#b9b29e"/><stop offset="0.783" stop-color="#aba592"/><stop offset="0.954" stop-color="#b0aa96"/><stop offset="1.000" stop-color="#b0aa96"/></linearGradient><rect x="254" y="338" width="2" height="590" fill="url(#pc57)"/><linearGradient id="pc58" x1="0" y1="338" x2="0" y2="928" gradientUnits="userSpaceOnUse"><stop offset="0.000" stop-color="#d3ccb3"/><stop offset="0.024" stop-color="#d3ccb3"/><stop offset="0.071" stop-color="#cec7af"/><stop offset="0.124" stop-color="#c7c0a8"/><stop offset="0.190" stop-color="#c5bfa7"/><stop offset="0.258" stop-color="#bdb6a1"/><stop offset="0.308" stop-color="#afa995"/><stop offset="0.444" stop-color="#aca693"/><stop offset="0.615" stop-color="#b5ae9a"/><stop offset="0.783" stop-color="#aca693"/><stop offset="0.954" stop-color="#afa996"/><stop offset="1.000" stop-color="#afa996"/></linearGradient><rect x="256" y="338" width="2" height="590" fill="url(#pc58)"/><linearGradient id="pc59" x1="0" y1="338" x2="0" y2="928" gradientUnits="userSpaceOnUse"><stop offset="0.000" stop-color="#d4cdb4"/><stop offset="0.024" stop-color="#d4cdb4"/><stop offset="0.071" stop-color="#cfc8b0"/><stop offset="0.124" stop-color="#c8c1a9"/><stop offset="0.190" stop-color="#c5bfa7"/><stop offset="0.258" stop-color="#bdb6a0"/><stop offset="0.308" stop-color="#b1aa96"/><stop offset="0.444" stop-color="#ada794"/><stop offset="0.615" stop-color="#b4ad9a"/><stop offset="0.783" stop-color="#ada693"/><stop offset="0.954" stop-color="#afa995"/><stop offset="1.000" stop-color="#afa995"/></linearGradient><rect x="258" y="338" width="2" height="590" fill="url(#pc59)"/><linearGradient id="pc60" x1="0" y1="338" x2="0" y2="928" gradientUnits="userSpaceOnUse"><stop offset="0.000" stop-color="#d5ceb5"/><stop offset="0.024" stop-color="#d5ceb5"/><stop offset="0.071" stop-color="#d0cab1"/><stop offset="0.124" stop-color="#c9c2aa"/><stop offset="0.190" stop-color="#c5bfa7"/><stop offset="0.258" stop-color="#bcb5a0"/><stop offset="0.308" stop-color="#b2ac98"/><stop offset="0.444" stop-color="#aea895"/><stop offset="0.615" stop-color="#b4ad99"/><stop offset="0.783" stop-color="#ada794"/><stop offset="0.954" stop-color="#afa995"/><stop offset="1.000" stop-color="#afa995"/></linearGradient><rect x="260" y="338" width="2" height="590" fill="url(#pc60)"/><linearGradient id="pc61" x1="0" y1="338" x2="0" y2="928" gradientUnits="userSpaceOnUse"><stop offset="0.000" stop-color="#d7d0b7"/><stop offset="0.024" stop-color="#d7d0b7"/><stop offset="0.071" stop-color="#d2cbb2"/><stop offset="0.124" stop-color="#cac3ab"/><stop offset="0.190" stop-color="#c5bfa7"/><stop offset="0.258" stop-color="#bbb49f"/><stop offset="0.308" stop-color="#b4ad99"/><stop offset="0.444" stop-color="#afa995"/><stop offset="0.615" stop-color="#b3ac98"/><stop offset="0.783" stop-color="#aea794"/><stop offset="0.954" stop-color="#afa995"/><stop offset="1.000" stop-color="#afa995"/></linearGradient><rect x="262" y="338" width="2" height="590" fill="url(#pc61)"/><linearGradient id="pc62" x1="0" y1="338" x2="0" y2="928" gradientUnits="userSpaceOnUse"><stop offset="0.000" stop-color="#d8d1b8"/><stop offset="0.024" stop-color="#d8d1b8"/><stop offset="0.071" stop-color="#d3ccb3"/><stop offset="0.124" stop-color="#cbc4ac"/><stop offset="0.190" stop-color="#c5bfa7"/><stop offset="0.258" stop-color="#bbb49f"/><stop offset="0.308" stop-color="#b5ae9a"/><stop offset="0.444" stop-color="#b0aa96"/><stop offset="0.615" stop-color="#b2ac98"/><stop offset="0.783" stop-color="#aea895"/><stop offset="0.954" stop-color="#aea895"/><stop offset="1.000" stop-color="#aea895"/></linearGradient><rect x="264" y="338" width="2" height="590" fill="url(#pc62)"/><linearGradient id="pc63" x1="0" y1="338" x2="0" y2="928" gradientUnits="userSpaceOnUse"><stop offset="0.000" stop-color="#d9d2b9"/><stop offset="0.024" stop-color="#d9d2b9"/><stop offset="0.071" stop-color="#d4cdb4"/><stop offset="0.124" stop-color="#cdc6ad"/><stop offset="0.190" stop-color="#c5bfa7"/><stop offset="0.258" stop-color="#bcb59f"/><stop offset="0.308" stop-color="#b7b09c"/><stop offset="0.444" stop-color="#b1ab97"/><stop offset="0.615" stop-color="#b1ab97"/><stop offset="0.783" stop-color="#afa895"/><stop offset="0.954" stop-color="#aea895"/><stop offset="1.000" stop-color="#aea895"/></linearGradient><rect x="266" y="338" width="2" height="590" fill="url(#pc63)"/><linearGradient id="pc64" x1="0" y1="338" x2="0" y2="928" gradientUnits="userSpaceOnUse"><stop offset="0.000" stop-color="#dad3ba"/><stop offset="0.024" stop-color="#dad3ba"/><stop offset="0.071" stop-color="#d6cfb6"/><stop offset="0.124" stop-color="#cec7ae"/><stop offset="0.190" stop-color="#c5bfa7"/><stop offset="0.258" stop-color="#bcb5a0"/><stop offset="0.308" stop-color="#b8b19d"/><stop offset="0.444" stop-color="#b2ac98"/><stop offset="0.615" stop-color="#b1aa97"/><stop offset="0.783" stop-color="#afa996"/><stop offset="0.954" stop-color="#aea894"/><stop offset="1.000" stop-color="#aea894"/></linearGradient><rect x="268" y="338" width="2" height="590" fill="url(#pc64)"/><linearGradient id="pc65" x1="0" y1="338" x2="0" y2="928" gradientUnits="userSpaceOnUse"><stop offset="0.000" stop-color="#dbd4ba"/><stop offset="0.024" stop-color="#dbd4ba"/><stop offset="0.071" stop-color="#d7d0b7"/><stop offset="0.124" stop-color="#cfc8af"/><stop offset="0.190" stop-color="#c5bfa7"/><stop offset="0.258" stop-color="#bdb6a1"/><stop offset="0.308" stop-color="#bab39e"/><stop offset="0.444" stop-color="#b3ad99"/><stop offset="0.615" stop-color="#b0aa96"/><stop offset="0.783" stop-color="#b0a996"/><stop offset="0.954" stop-color="#aea894"/><stop offset="1.000" stop-color="#aea894"/></linearGradient><rect x="270" y="338" width="2" height="590" fill="url(#pc65)"/><linearGradient id="pc66" x1="0" y1="338" x2="0" y2="928" gradientUnits="userSpaceOnUse"><stop offset="0.000" stop-color="#dbd4bb"/><stop offset="0.024" stop-color="#dbd4bb"/><stop offset="0.071" stop-color="#d9d2b8"/><stop offset="0.124" stop-color="#d0c9b0"/><stop offset="0.190" stop-color="#c5bfa7"/><stop offset="0.258" stop-color="#beb7a1"/><stop offset="0.308" stop-color="#bbb49f"/><stop offset="0.444" stop-color="#b4ae9a"/><stop offset="0.615" stop-color="#afa996"/><stop offset="0.783" stop-color="#b0aa96"/><stop offset="0.954" stop-color="#ada794"/><stop offset="1.000" stop-color="#ada794"/></linearGradient><rect x="272" y="338" width="2" height="590" fill="url(#pc66)"/><linearGradient id="pc67" x1="0" y1="338" x2="0" y2="928" gradientUnits="userSpaceOnUse"><stop offset="0.000" stop-color="#dcd5bc"/><stop offset="0.024" stop-color="#dcd5bc"/><stop offset="0.071" stop-color="#dad3ba"/><stop offset="0.124" stop-color="#d1cab1"/><stop offset="0.190" stop-color="#c5bfa7"/><stop offset="0.258" stop-color="#bfb8a2"/><stop offset="0.308" stop-color="#bcb5a0"/><stop offset="0.444" stop-color="#b5ae9a"/><stop offset="0.615" stop-color="#afa895"/><stop offset="0.783" stop-color="#b1aa97"/><stop offset="0.954" stop-color="#ada794"/><stop offset="1.000" stop-color="#ada794"/></linearGradient><rect x="274" y="338" width="2" height="590" fill="url(#pc67)"/><linearGradient id="pc68" x1="0" y1="338" x2="0" y2="928" gradientUnits="userSpaceOnUse"><stop offset="0.000" stop-color="#ddd6bd"/><stop offset="0.024" stop-color="#ddd6bd"/><stop offset="0.071" stop-color="#dbd4bb"/><stop offset="0.124" stop-color="#d2cbb2"/><stop offset="0.190" stop-color="#c5bfa7"/><stop offset="0.258" stop-color="#c0b9a3"/><stop offset="0.308" stop-color="#beb7a1"/><stop offset="0.444" stop-color="#b7b09c"/><stop offset="0.615" stop-color="#aea894"/><stop offset="0.783" stop-color="#b2ab97"/><stop offset="0.954" stop-color="#ada794"/><stop offset="1.000" stop-color="#ada794"/></linearGradient><rect x="276" y="338" width="2" height="590" fill="url(#pc68)"/><linearGradient id="pc69" x1="0" y1="338" x2="0" y2="928" gradientUnits="userSpaceOnUse"><stop offset="0.000" stop-color="#ded7be"/><stop offset="0.024" stop-color="#ded7be"/><stop offset="0.071" stop-color="#ddd6bc"/><stop offset="0.124" stop-color="#d3ccb3"/><stop offset="0.190" stop-color="#c5bfa7"/><stop offset="0.258" stop-color="#c1baa3"/><stop offset="0.308" stop-color="#bfb8a2"/><stop offset="0.444" stop-color="#b9b29d"/><stop offset="0.615" stop-color="#ada794"/><stop offset="0.783" stop-color="#b2ab98"/><stop offset="0.954" stop-color="#aca693"/><stop offset="1.000" stop-color="#aca693"/></linearGradient><rect x="278" y="338" width="2" height="590" fill="url(#pc69)"/><linearGradient id="pc70" x1="0" y1="338" x2="0" y2="928" gradientUnits="userSpaceOnUse"><stop offset="0.000" stop-color="#dfd8bf"/><stop offset="0.024" stop-color="#dfd8bf"/><stop offset="0.071" stop-color="#ded7be"/><stop offset="0.124" stop-color="#d4cdb4"/><stop offset="0.190" stop-color="#c5bfa7"/><stop offset="0.258" stop-color="#c1baa4"/><stop offset="0.308" stop-color="#c1baa3"/><stop offset="0.444" stop-color="#bbb49f"/><stop offset="0.615" stop-color="#aca693"/><stop offset="0.783" stop-color="#b3ac98"/><stop offset="0.954" stop-color="#aca693"/><stop offset="1.000" stop-color="#aca693"/></linearGradient><rect x="280" y="338" width="2" height="590" fill="url(#pc70)"/><linearGradient id="pc71" x1="0" y1="338" x2="0" y2="928" gradientUnits="userSpaceOnUse"><stop offset="0.000" stop-color="#e0d9bf"/><stop offset="0.024" stop-color="#e0d9bf"/><stop offset="0.071" stop-color="#dfd8bf"/><stop offset="0.124" stop-color="#d6cfb6"/><stop offset="0.190" stop-color="#c5bfa7"/><stop offset="0.258" stop-color="#c2bba5"/><stop offset="0.308" stop-color="#c2bba4"/><stop offset="0.444" stop-color="#bdb6a0"/><stop offset="0.615" stop-color="#ada794"/><stop offset="0.783" stop-color="#b3ac99"/><stop offset="0.954" stop-color="#ada794"/><stop offset="1.000" stop-color="#ada794"/></linearGradient><rect x="282" y="338" width="2" height="590" fill="url(#pc71)"/><linearGradient id="pc72" x1="0" y1="338" x2="0" y2="928" gradientUnits="userSpaceOnUse"><stop offset="0.000" stop-color="#e1dac0"/><stop offset="0.024" stop-color="#e1dac0"/><stop offset="0.071" stop-color="#e1dac0"/><stop offset="0.124" stop-color="#d7d0b7"/><stop offset="0.190" stop-color="#c5bfa7"/><stop offset="0.258" stop-color="#c3bca6"/><stop offset="0.308" stop-color="#c4bda6"/><stop offset="0.444" stop-color="#bfb8a2"/><stop offset="0.615" stop-color="#aea895"/><stop offset="0.783" stop-color="#b4ad99"/><stop offset="0.954" stop-color="#aea895"/><stop offset="1.000" stop-color="#aea895"/></linearGradient><rect x="284" y="338" width="2" height="590" fill="url(#pc72)"/><linearGradient id="pc73" x1="0" y1="338" x2="0" y2="928" gradientUnits="userSpaceOnUse"><stop offset="0.000" stop-color="#e2dbc1"/><stop offset="0.024" stop-color="#e2dbc1"/><stop offset="0.071" stop-color="#e2dbc2"/><stop offset="0.124" stop-color="#d9d2b8"/><stop offset="0.190" stop-color="#c5bfa7"/><stop offset="0.258" stop-color="#c4bda7"/><stop offset="0.308" stop-color="#c6bfa7"/><stop offset="0.444" stop-color="#c1baa3"/><stop offset="0.615" stop-color="#b0aa96"/><stop offset="0.783" stop-color="#b4ad9a"/><stop offset="0.954" stop-color="#afa996"/><stop offset="1.000" stop-color="#afa996"/></linearGradient><rect x="286" y="338" width="2" height="590" fill="url(#pc73)"/><linearGradient id="pc74" x1="0" y1="338" x2="0" y2="928" gradientUnits="userSpaceOnUse"><stop offset="0.000" stop-color="#e3dcc2"/><stop offset="0.024" stop-color="#e3dcc2"/><stop offset="0.071" stop-color="#e4ddc3"/><stop offset="0.124" stop-color="#dad3b9"/><stop offset="0.190" stop-color="#c5bfa7"/><stop offset="0.258" stop-color="#c6bfa7"/><stop offset="0.308" stop-color="#c7c0a9"/><stop offset="0.444" stop-color="#c3bca5"/><stop offset="0.615" stop-color="#b2ab98"/><stop offset="0.783" stop-color="#b5ae9a"/><stop offset="0.954" stop-color="#b1ab97"/><stop offset="1.000" stop-color="#b1ab97"/></linearGradient><rect x="288" y="338" width="2" height="590" fill="url(#pc74)"/><linearGradient id="pc75" x1="0" y1="338" x2="0" y2="928" gradientUnits="userSpaceOnUse"><stop offset="0.000" stop-color="#e4ddc3"/><stop offset="0.024" stop-color="#e4ddc3"/><stop offset="0.071" stop-color="#e5dec4"/><stop offset="0.124" stop-color="#dcd4ba"/><stop offset="0.190" stop-color="#c5bfa7"/><stop offset="0.258" stop-color="#c7c0a8"/><stop offset="0.308" stop-color="#c9c2aa"/><stop offset="0.444" stop-color="#c5bea7"/><stop offset="0.615" stop-color="#b3ad99"/><stop offset="0.783" stop-color="#b5ae9a"/><stop offset="0.954" stop-color="#b2ac98"/><stop offset="1.000" stop-color="#b2ac98"/></linearGradient><rect x="290" y="338" width="2" height="590" fill="url(#pc75)"/><linearGradient id="pc76" x1="0" y1="338" x2="0" y2="928" gradientUnits="userSpaceOnUse"><stop offset="0.000" stop-color="#e4ddc4"/><stop offset="0.024" stop-color="#e4ddc4"/><stop offset="0.071" stop-color="#e6dfc5"/><stop offset="0.124" stop-color="#ddd6bc"/><stop offset="0.190" stop-color="#c6c0a8"/><stop offset="0.258" stop-color="#c8c1a9"/><stop offset="0.308" stop-color="#cbc4ac"/><stop offset="0.444" stop-color="#c8c1a9"/><stop offset="0.615" stop-color="#b5ae9a"/><stop offset="0.783" stop-color="#b7b09c"/><stop offset="0.954" stop-color="#b4ad99"/><stop offset="1.000" stop-color="#b4ad99"/></linearGradient><rect x="292" y="338" width="2" height="590" fill="url(#pc76)"/><linearGradient id="pc77" x1="0" y1="338" x2="0" y2="928" gradientUnits="userSpaceOnUse"><stop offset="0.000" stop-color="#e5dec4"/><stop offset="0.024" stop-color="#e5dec4"/><stop offset="0.071" stop-color="#e7e0c6"/><stop offset="0.124" stop-color="#ded7bd"/><stop offset="0.190" stop-color="#c8c2a9"/><stop offset="0.258" stop-color="#c9c2aa"/><stop offset="0.308" stop-color="#cdc6ad"/><stop offset="0.444" stop-color="#cac3ab"/><stop offset="0.615" stop-color="#b7b09c"/><stop offset="0.783" stop-color="#b8b19d"/><stop offset="0.954" stop-color="#b5af9a"/><stop offset="1.000" stop-color="#b5af9a"/></linearGradient><rect x="294" y="338" width="2" height="590" fill="url(#pc77)"/><linearGradient id="pc78" x1="0" y1="338" x2="0" y2="928" gradientUnits="userSpaceOnUse"><stop offset="0.000" stop-color="#e6dfc5"/><stop offset="0.024" stop-color="#e6dfc5"/><stop offset="0.071" stop-color="#e8e1c7"/><stop offset="0.124" stop-color="#dfd8be"/><stop offset="0.190" stop-color="#cac3ab"/><stop offset="0.258" stop-color="#cac3ab"/><stop offset="0.308" stop-color="#cec7af"/><stop offset="0.444" stop-color="#cdc6ad"/><stop offset="0.615" stop-color="#b8b19d"/><stop offset="0.783" stop-color="#b9b29e"/><stop offset="0.954" stop-color="#b6b09b"/><stop offset="1.000" stop-color="#b6b09b"/></linearGradient><rect x="296" y="338" width="2" height="590" fill="url(#pc78)"/><linearGradient id="pc79" x1="0" y1="338" x2="0" y2="928" gradientUnits="userSpaceOnUse"><stop offset="0.000" stop-color="#e7e0c6"/><stop offset="0.024" stop-color="#e7e0c6"/><stop offset="0.071" stop-color="#e9e2c8"/><stop offset="0.124" stop-color="#e0d9bf"/><stop offset="0.190" stop-color="#cbc5ac"/><stop offset="0.258" stop-color="#cbc4ac"/><stop offset="0.308" stop-color="#d0c9b0"/><stop offset="0.444" stop-color="#cfc8af"/><stop offset="0.615" stop-color="#bab39e"/><stop offset="0.783" stop-color="#bbb49f"/><stop offset="0.954" stop-color="#b8b19c"/><stop offset="1.000" stop-color="#b8b19c"/></linearGradient><rect x="298" y="338" width="2" height="590" fill="url(#pc79)"/><linearGradient id="pc80" x1="0" y1="338" x2="0" y2="928" gradientUnits="userSpaceOnUse"><stop offset="0.000" stop-color="#e7e0c6"/><stop offset="0.024" stop-color="#e7e0c6"/><stop offset="0.071" stop-color="#eae3c9"/><stop offset="0.124" stop-color="#e1dac0"/><stop offset="0.190" stop-color="#cdc6ae"/><stop offset="0.258" stop-color="#ccc5ad"/><stop offset="0.308" stop-color="#d2cbb2"/><stop offset="0.444" stop-color="#d1cab1"/><stop offset="0.615" stop-color="#bbb49f"/><stop offset="0.783" stop-color="#bcb5a0"/><stop offset="0.954" stop-color="#b9b29d"/><stop offset="1.000" stop-color="#b9b29d"/></linearGradient><rect x="300" y="338" width="2" height="590" fill="url(#pc80)"/><linearGradient id="pc81" x1="0" y1="338" x2="0" y2="928" gradientUnits="userSpaceOnUse"><stop offset="0.000" stop-color="#e7e0c6"/><stop offset="0.024" stop-color="#e7e0c6"/><stop offset="0.071" stop-color="#eae3c9"/><stop offset="0.124" stop-color="#e3dcc2"/><stop offset="0.190" stop-color="#cec8af"/><stop offset="0.258" stop-color="#cdc6ae"/><stop offset="0.308" stop-color="#d2cbb2"/><stop offset="0.444" stop-color="#d2cbb1"/><stop offset="0.615" stop-color="#bdb6a1"/><stop offset="0.783" stop-color="#bdb6a1"/><stop offset="0.954" stop-color="#bab49e"/><stop offset="1.000" stop-color="#bab49e"/></linearGradient><rect x="302" y="338" width="2" height="590" fill="url(#pc81)"/><linearGradient id="pc82" x1="0" y1="338" x2="0" y2="928" gradientUnits="userSpaceOnUse"><stop offset="0.000" stop-color="#e8e1c7"/><stop offset="0.024" stop-color="#e8e1c7"/><stop offset="0.071" stop-color="#eae3c9"/><stop offset="0.124" stop-color="#e4ddc3"/><stop offset="0.190" stop-color="#d0c9b0"/><stop offset="0.258" stop-color="#cfc8af"/><stop offset="0.308" stop-color="#d3ccb3"/><stop offset="0.444" stop-color="#d2cbb2"/><stop offset="0.615" stop-color="#beb7a2"/><stop offset="0.783" stop-color="#bfb8a2"/><stop offset="0.954" stop-color="#bcb59f"/><stop offset="1.000" stop-color="#bcb59f"/></linearGradient><rect x="304" y="338" width="2" height="590" fill="url(#pc82)"/><linearGradient id="pc83" x1="0" y1="338" x2="0" y2="928" gradientUnits="userSpaceOnUse"><stop offset="0.000" stop-color="#e8e1c7"/><stop offset="0.024" stop-color="#e8e1c7"/><stop offset="0.071" stop-color="#ebe4ca"/><stop offset="0.124" stop-color="#e5dec4"/><stop offset="0.190" stop-color="#d1cbb2"/><stop offset="0.258" stop-color="#d0c9b0"/><stop offset="0.308" stop-color="#d5ceb4"/><stop offset="0.444" stop-color="#d3ccb3"/><stop offset="0.615" stop-color="#c0b9a3"/><stop offset="0.783" stop-color="#c0b9a3"/><stop offset="0.954" stop-color="#bdb6a0"/><stop offset="1.000" stop-color="#bdb6a0"/></linearGradient><rect x="306" y="338" width="2" height="590" fill="url(#pc83)"/><linearGradient id="pc84" x1="0" y1="338" x2="0" y2="928" gradientUnits="userSpaceOnUse"><stop offset="0.000" stop-color="#e8e1c7"/><stop offset="0.024" stop-color="#e8e1c7"/><stop offset="0.071" stop-color="#ebe4ca"/><stop offset="0.124" stop-color="#e6dfc5"/><stop offset="0.190" stop-color="#d3ccb3"/><stop offset="0.258" stop-color="#d1cab2"/><stop offset="0.308" stop-color="#d6cfb5"/><stop offset="0.444" stop-color="#d5ceb4"/><stop offset="0.615" stop-color="#c2bba4"/><stop offset="0.783" stop-color="#c1baa4"/><stop offset="0.954" stop-color="#beb7a1"/><stop offset="1.000" stop-color="#beb7a1"/></linearGradient><rect x="308" y="338" width="2" height="590" fill="url(#pc84)"/><linearGradient id="pc85" x1="0" y1="338" x2="0" y2="928" gradientUnits="userSpaceOnUse"><stop offset="0.000" stop-color="#e9e2c8"/><stop offset="0.024" stop-color="#e9e2c8"/><stop offset="0.071" stop-color="#ebe4ca"/><stop offset="0.124" stop-color="#e7e0c6"/><stop offset="0.190" stop-color="#d5ceb5"/><stop offset="0.258" stop-color="#d2cbb3"/><stop offset="0.308" stop-color="#d7d0b7"/><stop offset="0.444" stop-color="#d6cfb5"/><stop offset="0.615" stop-color="#c3bca6"/><stop offset="0.783" stop-color="#c3bca5"/><stop offset="0.954" stop-color="#c0b9a3"/><stop offset="1.000" stop-color="#c0b9a3"/></linearGradient><rect x="310" y="338" width="2" height="590" fill="url(#pc85)"/><linearGradient id="pc86" x1="0" y1="338" x2="0" y2="928" gradientUnits="userSpaceOnUse"><stop offset="0.000" stop-color="#e9e2c8"/><stop offset="0.024" stop-color="#e9e2c8"/><stop offset="0.071" stop-color="#ebe4ca"/><stop offset="0.124" stop-color="#e8e1c7"/><stop offset="0.190" stop-color="#d7d0b7"/><stop offset="0.258" stop-color="#d4cdb4"/><stop offset="0.308" stop-color="#d8d1b8"/><stop offset="0.444" stop-color="#d7d0b6"/><stop offset="0.615" stop-color="#c5bea7"/><stop offset="0.783" stop-color="#c4bda6"/><stop offset="0.954" stop-color="#c1baa4"/><stop offset="1.000" stop-color="#c1baa4"/></linearGradient><rect x="312" y="338" width="2" height="590" fill="url(#pc86)"/><linearGradient id="pc87" x1="0" y1="338" x2="0" y2="928" gradientUnits="userSpaceOnUse"><stop offset="0.000" stop-color="#e9e2c8"/><stop offset="0.024" stop-color="#e9e2c8"/><stop offset="0.071" stop-color="#ebe4ca"/><stop offset="0.124" stop-color="#e9e2c8"/><stop offset="0.190" stop-color="#d9d2b9"/><stop offset="0.258" stop-color="#d5ceb6"/><stop offset="0.308" stop-color="#d9d2b9"/><stop offset="0.444" stop-color="#d8d1b8"/><stop offset="0.615" stop-color="#c7c0a9"/><stop offset="0.783" stop-color="#c6bfa8"/><stop offset="0.954" stop-color="#c3bca5"/><stop offset="1.000" stop-color="#c3bca5"/></linearGradient><rect x="314" y="338" width="2" height="590" fill="url(#pc87)"/><linearGradient id="pc88" x1="0" y1="338" x2="0" y2="928" gradientUnits="userSpaceOnUse"><stop offset="0.000" stop-color="#eae3c9"/><stop offset="0.024" stop-color="#eae3c9"/><stop offset="0.071" stop-color="#ece5cb"/><stop offset="0.124" stop-color="#eae3c9"/><stop offset="0.190" stop-color="#dbd4ba"/><stop offset="0.258" stop-color="#d7d0b7"/><stop offset="0.308" stop-color="#dad3ba"/><stop offset="0.444" stop-color="#d9d2b9"/><stop offset="0.615" stop-color="#c9c2ab"/><stop offset="0.783" stop-color="#c8c1a9"/><stop offset="0.954" stop-color="#c5bea7"/><stop offset="1.000" stop-color="#c5bea7"/></linearGradient><rect x="316" y="338" width="2" height="590" fill="url(#pc88)"/><linearGradient id="pc89" x1="0" y1="338" x2="0" y2="928" gradientUnits="userSpaceOnUse"><stop offset="0.000" stop-color="#eae3c9"/><stop offset="0.024" stop-color="#eae3c9"/><stop offset="0.071" stop-color="#ece5cb"/><stop offset="0.124" stop-color="#eae3c9"/><stop offset="0.190" stop-color="#ddd6bc"/><stop offset="0.258" stop-color="#d9d2b9"/><stop offset="0.308" stop-color="#dbd4bb"/><stop offset="0.444" stop-color="#dad3ba"/><stop offset="0.615" stop-color="#cbc4ac"/><stop offset="0.783" stop-color="#c9c2aa"/><stop offset="0.954" stop-color="#c6bfa8"/><stop offset="1.000" stop-color="#c6bfa8"/></linearGradient><rect x="318" y="338" width="2" height="590" fill="url(#pc89)"/><linearGradient id="pc90" x1="0" y1="338" x2="0" y2="928" gradientUnits="userSpaceOnUse"><stop offset="0.000" stop-color="#eae3c9"/><stop offset="0.024" stop-color="#eae3c9"/><stop offset="0.071" stop-color="#ece5cb"/><stop offset="0.124" stop-color="#e9e2c8"/><stop offset="0.190" stop-color="#dfd8be"/><stop offset="0.258" stop-color="#dad3ba"/><stop offset="0.308" stop-color="#ddd6bc"/><stop offset="0.444" stop-color="#dbd4bb"/><stop offset="0.615" stop-color="#cdc6ae"/><stop offset="0.783" stop-color="#cbc4ac"/><stop offset="0.954" stop-color="#c8c1aa"/><stop offset="1.000" stop-color="#c8c1aa"/></linearGradient><rect x="320" y="338" width="2" height="590" fill="url(#pc90)"/><linearGradient id="pc91" x1="0" y1="338" x2="0" y2="928" gradientUnits="userSpaceOnUse"><stop offset="0.000" stop-color="#eae3c9"/><stop offset="0.024" stop-color="#eae3c9"/><stop offset="0.071" stop-color="#ece5cb"/><stop offset="0.124" stop-color="#e9e2c8"/><stop offset="0.190" stop-color="#e0d9c0"/><stop offset="0.258" stop-color="#dcd5bc"/><stop offset="0.308" stop-color="#ded7bd"/><stop offset="0.444" stop-color="#ddd6bc"/><stop offset="0.615" stop-color="#cfc8b0"/><stop offset="0.783" stop-color="#cdc6ad"/><stop offset="0.954" stop-color="#cac3ab"/><stop offset="1.000" stop-color="#cac3ab"/></linearGradient><rect x="322" y="338" width="2" height="590" fill="url(#pc91)"/><linearGradient id="pc92" x1="0" y1="338" x2="0" y2="928" gradientUnits="userSpaceOnUse"><stop offset="0.000" stop-color="#eae3c9"/><stop offset="0.024" stop-color="#eae3c9"/><stop offset="0.071" stop-color="#ece5cb"/><stop offset="0.124" stop-color="#e8e1c7"/><stop offset="0.190" stop-color="#e2dbc2"/><stop offset="0.258" stop-color="#ded7bd"/><stop offset="0.308" stop-color="#dfd8be"/><stop offset="0.444" stop-color="#ded7bd"/><stop offset="0.615" stop-color="#d1cab1"/><stop offset="0.783" stop-color="#cec7ae"/><stop offset="0.954" stop-color="#ccc5ad"/><stop offset="1.000" stop-color="#ccc5ad"/></linearGradient><rect x="324" y="338" width="2" height="590" fill="url(#pc92)"/><linearGradient id="pc93" x1="0" y1="338" x2="0" y2="928" gradientUnits="userSpaceOnUse"><stop offset="0.000" stop-color="#eae3c9"/><stop offset="0.024" stop-color="#eae3c9"/><stop offset="0.071" stop-color="#ede6cc"/><stop offset="0.124" stop-color="#e8e1c7"/><stop offset="0.190" stop-color="#e4ddc4"/><stop offset="0.258" stop-color="#dfd8bf"/><stop offset="0.308" stop-color="#e0d9bf"/><stop offset="0.444" stop-color="#dfd8be"/><stop offset="0.615" stop-color="#d3ccb3"/><stop offset="0.783" stop-color="#d0c9b0"/><stop offset="0.954" stop-color="#cec7af"/><stop offset="1.000" stop-color="#cec7af"/></linearGradient><rect x="326" y="338" width="2" height="590" fill="url(#pc93)"/><linearGradient id="pc94" x1="0" y1="338" x2="0" y2="928" gradientUnits="userSpaceOnUse"><stop offset="0.000" stop-color="#eae3c9"/><stop offset="0.024" stop-color="#eae3c9"/><stop offset="0.071" stop-color="#ede6cc"/><stop offset="0.124" stop-color="#e7e0c6"/><stop offset="0.190" stop-color="#e6dfc5"/><stop offset="0.258" stop-color="#e1dac0"/><stop offset="0.308" stop-color="#e1dac0"/><stop offset="0.444" stop-color="#e0d9bf"/><stop offset="0.615" stop-color="#d4cdb4"/><stop offset="0.783" stop-color="#d1cab1"/><stop offset="0.954" stop-color="#cfc8b0"/><stop offset="1.000" stop-color="#cfc8b0"/></linearGradient><rect x="328" y="338" width="2" height="590" fill="url(#pc94)"/><linearGradient id="pc95" x1="0" y1="338" x2="0" y2="928" gradientUnits="userSpaceOnUse"><stop offset="0.000" stop-color="#eae3c9"/><stop offset="0.024" stop-color="#eae3c9"/><stop offset="0.071" stop-color="#ede6cc"/><stop offset="0.124" stop-color="#e7e0c6"/><stop offset="0.190" stop-color="#e7e0c6"/><stop offset="0.258" stop-color="#e2dbc2"/><stop offset="0.308" stop-color="#e2dbc1"/><stop offset="0.444" stop-color="#e1dac0"/><stop offset="0.615" stop-color="#d6cfb6"/><stop offset="0.783" stop-color="#d3ccb3"/><stop offset="0.954" stop-color="#d1cab2"/><stop offset="1.000" stop-color="#d1cab2"/></linearGradient><rect x="330" y="338" width="2" height="590" fill="url(#pc95)"/><linearGradient id="pc96" x1="0" y1="338" x2="0" y2="928" gradientUnits="userSpaceOnUse"><stop offset="0.000" stop-color="#eae3c9"/><stop offset="0.024" stop-color="#eae3c9"/><stop offset="0.071" stop-color="#ede6cc"/><stop offset="0.124" stop-color="#e6dfc5"/><stop offset="0.190" stop-color="#e9e2c8"/><stop offset="0.258" stop-color="#e4ddc3"/><stop offset="0.308" stop-color="#e3dcc3"/><stop offset="0.444" stop-color="#e2dbc1"/><stop offset="0.615" stop-color="#d7d0b7"/><stop offset="0.783" stop-color="#d5ceb4"/><stop offset="0.954" stop-color="#d3ccb3"/><stop offset="1.000" stop-color="#d3ccb3"/></linearGradient><rect x="332" y="338" width="2" height="590" fill="url(#pc96)"/><linearGradient id="pc97" x1="0" y1="338" x2="0" y2="928" gradientUnits="userSpaceOnUse"><stop offset="0.000" stop-color="#eae3c9"/><stop offset="0.024" stop-color="#eae3c9"/><stop offset="0.071" stop-color="#ede6cc"/><stop offset="0.124" stop-color="#e6dfc5"/><stop offset="0.190" stop-color="#e7e0c6"/><stop offset="0.258" stop-color="#e5dec4"/><stop offset="0.308" stop-color="#e5dec4"/><stop offset="0.444" stop-color="#e3dcc2"/><stop offset="0.615" stop-color="#d9d2b8"/><stop offset="0.783" stop-color="#d7d0b6"/><stop offset="0.954" stop-color="#d5ceb6"/><stop offset="1.000" stop-color="#d5ceb6"/></linearGradient><rect x="334" y="338" width="2" height="590" fill="url(#pc97)"/><linearGradient id="pc98" x1="0" y1="338" x2="0" y2="928" gradientUnits="userSpaceOnUse"><stop offset="0.000" stop-color="#eae3c9"/><stop offset="0.024" stop-color="#eae3c9"/><stop offset="0.071" stop-color="#ede6cc"/><stop offset="0.124" stop-color="#e5dec4"/><stop offset="0.190" stop-color="#e5dec4"/><stop offset="0.258" stop-color="#e6dfc5"/><stop offset="0.308" stop-color="#e5dec4"/><stop offset="0.444" stop-color="#e4ddc3"/><stop offset="0.615" stop-color="#dad3ba"/><stop offset="0.783" stop-color="#d9d2b8"/><stop offset="0.954" stop-color="#d7d0b7"/><stop offset="1.000" stop-color="#d7d0b7"/></linearGradient><rect x="336" y="338" width="2" height="590" fill="url(#pc98)"/><linearGradient id="pc99" x1="0" y1="338" x2="0" y2="928" gradientUnits="userSpaceOnUse"><stop offset="0.000" stop-color="#eae3c9"/><stop offset="0.024" stop-color="#eae3c9"/><stop offset="0.071" stop-color="#ede6cc"/><stop offset="0.124" stop-color="#e5dec4"/><stop offset="0.190" stop-color="#e3dcc2"/><stop offset="0.258" stop-color="#e5dec4"/><stop offset="0.308" stop-color="#e5dec4"/><stop offset="0.444" stop-color="#e5dec4"/><stop offset="0.615" stop-color="#dcd5bb"/><stop offset="0.783" stop-color="#dbd4ba"/><stop offset="0.954" stop-color="#d9d2b9"/><stop offset="1.000" stop-color="#d9d2b9"/></linearGradient><rect x="338" y="338" width="2" height="590" fill="url(#pc99)"/><linearGradient id="pc100" x1="0" y1="338" x2="0" y2="928" gradientUnits="userSpaceOnUse"><stop offset="0.000" stop-color="#eae3c9"/><stop offset="0.024" stop-color="#eae3c9"/><stop offset="0.071" stop-color="#ede6cc"/><stop offset="0.124" stop-color="#e4ddc3"/><stop offset="0.190" stop-color="#e1dac0"/><stop offset="0.258" stop-color="#e4ddc3"/><stop offset="0.308" stop-color="#e5dec4"/><stop offset="0.444" stop-color="#e5dec4"/><stop offset="0.615" stop-color="#ddd6bd"/><stop offset="0.783" stop-color="#ddd6bc"/><stop offset="0.954" stop-color="#dad3ba"/><stop offset="1.000" stop-color="#dad3ba"/></linearGradient><rect x="340" y="338" width="2" height="590" fill="url(#pc100)"/><linearGradient id="pc101" x1="0" y1="338" x2="0" y2="928" gradientUnits="userSpaceOnUse"><stop offset="0.000" stop-color="#eae3c9"/><stop offset="0.024" stop-color="#eae3c9"/><stop offset="0.071" stop-color="#ede6cc"/><stop offset="0.124" stop-color="#e4ddc3"/><stop offset="0.190" stop-color="#dfd8be"/><stop offset="0.258" stop-color="#e3dcc2"/><stop offset="0.308" stop-color="#e5dec4"/><stop offset="0.444" stop-color="#e5dec4"/><stop offset="0.615" stop-color="#dfd8be"/><stop offset="0.783" stop-color="#e0d9be"/><stop offset="0.954" stop-color="#dcd5bb"/><stop offset="1.000" stop-color="#dcd5bb"/></linearGradient><rect x="342" y="338" width="2" height="590" fill="url(#pc101)"/><linearGradient id="pc102" x1="0" y1="338" x2="0" y2="928" gradientUnits="userSpaceOnUse"><stop offset="0.000" stop-color="#eae3c9"/><stop offset="0.024" stop-color="#eae3c9"/><stop offset="0.071" stop-color="#ede6cc"/><stop offset="0.124" stop-color="#e4ddc3"/><stop offset="0.190" stop-color="#dcd5bb"/><stop offset="0.258" stop-color="#e2dbc1"/><stop offset="0.308" stop-color="#e5dec4"/><stop offset="0.444" stop-color="#e6dfc5"/><stop offset="0.615" stop-color="#e0d9bf"/><stop offset="0.783" stop-color="#e2dbc0"/><stop offset="0.954" stop-color="#ddd6bd"/><stop offset="1.000" stop-color="#ddd6bd"/></linearGradient><rect x="344" y="338" width="2" height="590" fill="url(#pc102)"/><linearGradient id="pc103" x1="0" y1="338" x2="0" y2="928" gradientUnits="userSpaceOnUse"><stop offset="0.000" stop-color="#eae3c9"/><stop offset="0.024" stop-color="#eae3c9"/><stop offset="0.071" stop-color="#ede6cc"/><stop offset="0.124" stop-color="#e4ddc3"/><stop offset="0.190" stop-color="#dad3b9"/><stop offset="0.258" stop-color="#e1dac0"/><stop offset="0.308" stop-color="#e5dec4"/><stop offset="0.444" stop-color="#e6dfc5"/><stop offset="0.615" stop-color="#e1dac0"/><stop offset="0.783" stop-color="#e2dbc0"/><stop offset="0.954" stop-color="#dfd8be"/><stop offset="1.000" stop-color="#dfd8be"/></linearGradient><rect x="346" y="338" width="2" height="590" fill="url(#pc103)"/><linearGradient id="pc104" x1="0" y1="338" x2="0" y2="928" gradientUnits="userSpaceOnUse"><stop offset="0.000" stop-color="#eae3c9"/><stop offset="0.024" stop-color="#eae3c9"/><stop offset="0.071" stop-color="#ede6cc"/><stop offset="0.124" stop-color="#e4ddc3"/><stop offset="0.190" stop-color="#d9d2b8"/><stop offset="0.258" stop-color="#e0d9bf"/><stop offset="0.308" stop-color="#e5dec4"/><stop offset="0.444" stop-color="#e6dfc5"/><stop offset="0.615" stop-color="#e2dbc1"/><stop offset="0.783" stop-color="#e3dcc1"/><stop offset="0.954" stop-color="#e0d9c0"/><stop offset="1.000" stop-color="#e0d9c0"/></linearGradient><rect x="348" y="338" width="2" height="590" fill="url(#pc104)"/><linearGradient id="pc105" x1="0" y1="338" x2="0" y2="928" gradientUnits="userSpaceOnUse"><stop offset="0.000" stop-color="#eae3c9"/><stop offset="0.024" stop-color="#eae3c9"/><stop offset="0.071" stop-color="#ede6cc"/><stop offset="0.124" stop-color="#e4ddc3"/><stop offset="0.190" stop-color="#d9d2b8"/><stop offset="0.258" stop-color="#dfd8be"/><stop offset="0.308" stop-color="#e5dec4"/><stop offset="0.444" stop-color="#e7e0c6"/><stop offset="0.615" stop-color="#e2dbc1"/><stop offset="0.783" stop-color="#e4ddc2"/><stop offset="0.954" stop-color="#e2dbc1"/><stop offset="1.000" stop-color="#e2dbc1"/></linearGradient><rect x="350" y="338" width="2" height="590" fill="url(#pc105)"/><linearGradient id="pc106" x1="0" y1="338" x2="0" y2="928" gradientUnits="userSpaceOnUse"><stop offset="0.000" stop-color="#eae3c9"/><stop offset="0.024" stop-color="#eae3c9"/><stop offset="0.071" stop-color="#ede6cc"/><stop offset="0.124" stop-color="#e4ddc3"/><stop offset="0.190" stop-color="#d9d2b8"/><stop offset="0.258" stop-color="#dfd8be"/><stop offset="0.308" stop-color="#e5dec4"/><stop offset="0.444" stop-color="#e7e0c6"/><stop offset="0.615" stop-color="#e3dcc2"/><stop offset="0.783" stop-color="#e4ddc2"/><stop offset="0.954" stop-color="#e3dcc2"/><stop offset="1.000" stop-color="#e3dcc2"/></linearGradient><rect x="352" y="338" width="2" height="590" fill="url(#pc106)"/><linearGradient id="pc107" x1="0" y1="338" x2="0" y2="928" gradientUnits="userSpaceOnUse"><stop offset="0.000" stop-color="#eae3c9"/><stop offset="0.024" stop-color="#eae3c9"/><stop offset="0.071" stop-color="#ede6cc"/><stop offset="0.124" stop-color="#e4ddc3"/><stop offset="0.190" stop-color="#d9d2b8"/><stop offset="0.258" stop-color="#dfd8be"/><stop offset="0.308" stop-color="#e5dec4"/><stop offset="0.444" stop-color="#e7e0c6"/><stop offset="0.615" stop-color="#e4ddc3"/><stop offset="0.783" stop-color="#e5dec3"/><stop offset="0.954" stop-color="#e4ddc3"/><stop offset="1.000" stop-color="#e4ddc3"/></linearGradient><rect x="354" y="338" width="2" height="590" fill="url(#pc107)"/><linearGradient id="pc108" x1="0" y1="338" x2="0" y2="928" gradientUnits="userSpaceOnUse"><stop offset="0.000" stop-color="#eae3c9"/><stop offset="0.024" stop-color="#eae3c9"/><stop offset="0.071" stop-color="#ede6cc"/><stop offset="0.124" stop-color="#e4ddc3"/><stop offset="0.190" stop-color="#d9d2b8"/><stop offset="0.258" stop-color="#dfd8be"/><stop offset="0.308" stop-color="#e5dec4"/><stop offset="0.444" stop-color="#e7e0c6"/><stop offset="0.615" stop-color="#e4ddc3"/><stop offset="0.783" stop-color="#e5dec3"/><stop offset="0.954" stop-color="#e5dec4"/><stop offset="1.000" stop-color="#e5dec4"/></linearGradient><rect x="356" y="338" width="2" height="590" fill="url(#pc108)"/><linearGradient id="pc109" x1="0" y1="338" x2="0" y2="928" gradientUnits="userSpaceOnUse"><stop offset="0.000" stop-color="#eae3c9"/><stop offset="0.024" stop-color="#eae3c9"/><stop offset="0.071" stop-color="#ede6cc"/><stop offset="0.124" stop-color="#e4ddc3"/><stop offset="0.190" stop-color="#d9d2b8"/><stop offset="0.258" stop-color="#dfd8be"/><stop offset="0.308" stop-color="#e5dec4"/><stop offset="0.444" stop-color="#e7e0c6"/><stop offset="0.615" stop-color="#e4ddc3"/><stop offset="0.783" stop-color="#e6dfc4"/><stop offset="0.954" stop-color="#e6dfc5"/><stop offset="1.000" stop-color="#e6dfc5"/></linearGradient><rect x="358" y="338" width="2" height="590" fill="url(#pc109)"/><linearGradient id="pc110" x1="0" y1="338" x2="0" y2="928" gradientUnits="userSpaceOnUse"><stop offset="0.000" stop-color="#eae3c9"/><stop offset="0.024" stop-color="#eae3c9"/><stop offset="0.071" stop-color="#ede6cc"/><stop offset="0.124" stop-color="#e4ddc3"/><stop offset="0.190" stop-color="#d9d2b8"/><stop offset="0.258" stop-color="#dfd8be"/><stop offset="0.308" stop-color="#e5dec4"/><stop offset="0.444" stop-color="#e7e0c6"/><stop offset="0.615" stop-color="#e4ddc3"/><stop offset="0.783" stop-color="#e6dfc4"/><stop offset="0.954" stop-color="#e7e0c6"/><stop offset="1.000" stop-color="#e7e0c6"/></linearGradient><rect x="360" y="338" width="2" height="590" fill="url(#pc110)"/><linearGradient id="pc111" x1="0" y1="338" x2="0" y2="928" gradientUnits="userSpaceOnUse"><stop offset="0.000" stop-color="#eae3c9"/><stop offset="0.024" stop-color="#eae3c9"/><stop offset="0.071" stop-color="#ede6cc"/><stop offset="0.124" stop-color="#e4ddc3"/><stop offset="0.190" stop-color="#d9d2b8"/><stop offset="0.258" stop-color="#dfd8be"/><stop offset="0.308" stop-color="#e5dec4"/><stop offset="0.444" stop-color="#e7e0c6"/><stop offset="0.615" stop-color="#e4ddc3"/><stop offset="0.783" stop-color="#e6dfc4"/><stop offset="0.954" stop-color="#e7e0c6"/><stop offset="1.000" stop-color="#e7e0c6"/></linearGradient><rect x="362" y="338" width="2" height="590" fill="url(#pc111)"/><linearGradient id="pc112" x1="0" y1="338" x2="0" y2="928" gradientUnits="userSpaceOnUse"><stop offset="0.000" stop-color="#eae3c9"/><stop offset="0.024" stop-color="#eae3c9"/><stop offset="0.071" stop-color="#ede6cc"/><stop offset="0.124" stop-color="#e4ddc3"/><stop offset="0.190" stop-color="#d9d2b8"/><stop offset="0.258" stop-color="#dfd8be"/><stop offset="0.308" stop-color="#e5dec4"/><stop offset="0.444" stop-color="#e7e0c6"/><stop offset="0.615" stop-color="#e4ddc3"/><stop offset="0.783" stop-color="#e6dfc4"/><stop offset="0.954" stop-color="#e7e0c6"/><stop offset="1.000" stop-color="#e7e0c6"/></linearGradient><rect x="364" y="338" width="2" height="590" fill="url(#pc112)"/></g><ellipse cx="212" cy="428" rx="15" ry="6" fill="#b9b39d" filter="url(#b3)" opacity="0.5" transform="rotate(12 212 428)"/><ellipse cx="199" cy="412" rx="6.5" ry="4" fill="#d8d2b8" filter="url(#b2)" opacity="0.9" transform="rotate(-25 199 412)"/><path d="M185,356 Q253,358.6 321,356" stroke="#ebe5cb" stroke-width="0.9" fill="none" opacity="0.85"/><path d="M185,357 Q253,359.6 321,357" stroke="#bdb9a0" stroke-width="0.8" fill="none" opacity="0.7"/><linearGradient id="seamg" x1="0" y1="340" x2="0" y2="480" gradientUnits="userSpaceOnUse"><stop offset="0" stop-color="#ede7ce"/><stop offset="0.6" stop-color="#e8e2c8" stop-opacity="0.9"/><stop offset="1" stop-color="#e6e1c6" stop-opacity="0.2"/></linearGradient><path d="M249.5,340 L249.3,478" stroke="url(#seamg)" stroke-width="1" fill="none"/><path d="M207.2,357.5 L203,390 L199.1,412" stroke="#bdb9a0" stroke-width="0.8" fill="none" opacity="0.8"/><path d="M292.2,357.5 L295,390 L297.6,414" stroke="#bdb9a0" stroke-width="0.8" fill="none" opacity="0.8"/></g></g><g clip-path="url(#clip2d)"><g stroke="#c0c0c0" stroke-width="1.2" fill="none"><path d="M626.8,16V949"/><path d="M670.1,16V949"/><path d="M713.3,16V949"/><path d="M799.9,16V949"/><path d="M843.1,16V949"/><path d="M886.4,16V949"/><path d="M929.7,16V949"/><path d="M973.0,16V949"/><path d="M1016.2,16V949"/><path d="M1059.5,16V949"/><path d="M1102.8,16V949"/><path d="M1146.0,16V949"/><path d="M1189.3,16V949"/><path d="M1232.6,16V949"/><path d="M1275.8,16V949"/><path d="M600,31.7H1284"/><path d="M600,75.0H1284"/><path d="M600,118.3H1284"/><path d="M600,161.5H1284"/><path d="M600,204.8H1284"/><path d="M600,248.1H1284"/><path d="M600,291.4H1284"/><path d="M600,334.6H1284"/><path d="M600,377.9H1284"/><path d="M600,421.2H1284"/><path d="M600,464.4H1284"/><path d="M600,507.7H1284"/><path d="M600,551.0H1284"/><path d="M600,594.2H1284"/><path d="M600,637.5H1284"/><path d="M600,680.8H1284"/><path d="M600,724.1H1284"/><path d="M600,767.3H1284"/><path d="M600,853.9H1284"/><path d="M600,897.1H1284"/><path d="M600,940.4H1284"/></g></g><g clip-path="url(#clip2d)"><path d="M756.5,140.9C758.4,140.9 765.1,140.6 768.0,141.0C770.9,141.4 772.5,142.0 774.0,143.5C775.5,145.0 775.9,146.6 776.8,150.0C777.6,153.4 778.1,160.5 779.1,164.0C780.1,167.5 781.1,169.1 783.0,171.0C784.9,172.9 785.9,173.4 790.7,175.7C795.5,177.9 804.6,181.4 812.0,184.5C819.4,187.6 829.8,190.6 834.8,194.2C839.8,197.8 840.0,201.2 841.7,205.8C843.4,210.4 844.6,217.4 845.2,222.0C845.8,226.6 845.8,230.3 845.2,233.6C844.6,236.9 843.4,240.2 841.7,241.7C840.0,243.2 837.1,242.7 834.8,242.6C832.5,242.5 829.5,240.4 827.8,241.0C826.0,241.6 826.2,240.3 824.3,246.4C822.4,252.5 819.1,265.1 816.2,277.7C813.3,290.2 809.2,309.6 807.0,321.7C804.8,333.8 803.8,340.3 803.0,350.0C802.2,359.7 801.5,368.3 802.0,380.0C802.5,391.7 805.3,405.0 806.0,420.0C806.7,435.0 807.3,453.3 806.0,470.0C804.7,486.7 800.7,505.0 798.0,520.0C795.3,535.0 794.6,553.3 790.0,560.0C785.4,566.7 774.3,570.0 770.6,560.0C766.9,550.0 769.3,519.2 768.0,500.0C766.7,480.8 764.2,455.5 763.0,445.0C761.8,434.5 761.6,438.7 760.5,437.0C759.4,435.3 757.8,434.8 756.5,434.8C755.2,434.8 753.6,435.3 752.5,437.0C751.4,438.7 751.2,434.5 750.0,445.0C748.8,455.5 746.3,480.8 745.0,500.0C743.7,519.2 746.1,550.0 742.4,560.0C738.7,570.0 727.6,566.7 723.0,560.0C718.4,553.3 717.7,535.0 715.0,520.0C712.3,505.0 708.3,486.7 707.0,470.0C705.7,453.3 706.3,435.0 707.0,420.0C707.7,405.0 710.5,391.7 711.0,380.0C711.5,368.3 710.8,359.7 710.0,350.0C709.2,340.3 708.2,333.8 706.0,321.7C703.8,309.6 699.7,290.2 696.8,277.7C693.9,265.1 690.6,252.5 688.7,246.4C686.8,240.3 687.0,241.6 685.2,241.0C683.5,240.4 680.5,242.5 678.2,242.6C675.9,242.7 673.0,243.2 671.3,241.7C669.6,240.2 668.4,236.9 667.8,233.6C667.2,230.3 667.2,226.6 667.8,222.0C668.4,217.4 669.6,210.4 671.3,205.8C673.0,201.2 673.2,197.8 678.2,194.2C683.2,190.6 693.6,187.6 701.0,184.5C708.4,181.4 717.5,177.9 722.3,175.7C727.1,173.4 728.1,172.9 730.0,171.0C731.9,169.1 732.9,167.5 733.9,164.0C734.9,160.5 735.4,153.4 736.2,150.0C737.1,146.6 737.5,145.0 739.0,143.5C740.5,142.0 744.0,141.4 745.0,141.0Z" fill="#bababa"/></g><g clip-path="url(#clip2d)" stroke="#9b9b9b" stroke-width="1.6" fill="none"><path d="M756.6,16V949"/><path d="M600,810.6H1284"/></g><linearGradient id="wbg" x1="0" y1="0" x2="0" y2="1"><stop offset="0" stop-color="#d9a662"/><stop offset="0.3" stop-color="#dcaa68"/><stop offset="0.5" stop-color="#e9c696"/><stop offset="0.7" stop-color="#e6bf89"/><stop offset="0.85" stop-color="#d9a662"/><stop offset="1" stop-color="#d9a662"/></linearGradient><rect x="633" y="259.2" width="286.29999999999995" height="13.699999999999989" fill="url(#wbg)"/><path d="M633,259.2H919.3M633,272.9H919.3" stroke="#5aa84a" stroke-width="2"/><path d="M633,259.2V272.9M919.3,259.2V272.9" stroke="#6b5230" stroke-width="1.2"/><circle cx="633" cy="259.2" r="1.9" fill="#2b2b2b"/><circle cx="633" cy="272.9" r="1.9" fill="#2b2b2b"/><circle cx="919.3" cy="259.2" r="1.9" fill="#2b2b2b"/><circle cx="919.3" cy="272.9" r="1.9" fill="#2b2b2b"/><g clip-path="url(#clip2d)"><path d="M741.5,545.9H777.5" stroke="#6d93b9" stroke-width="1.6"/><path d="M1102.2,552.7L1140.5,551.2" stroke="#6d93b9" stroke-width="1.6"/><path d="M630.1,330.7Q652.0,330.2 675.3,328.6L681.0,374.1L686.8,328.6Q702.0,328.8 717.8,329.9C719.5,360.0 719.3,395.0 720.0,417.5C721.5,436.0 725.0,446.0 731.5,450.7Q736.0,454.0 742.5,456.6L741.0,581.8L739.2,763.9L622.5,763.9L620.6,581.8L619.2,417.5C619.2,385.0 623.0,352.0 630.1,330.7Z" fill="none" stroke="#82aedb" stroke-width="10.4" stroke-linejoin="bevel"/><path d="M630.1,330.7Q652.0,330.2 675.3,328.6L681.0,374.1L686.8,328.6Q702.0,328.8 717.8,329.9C719.5,360.0 719.3,395.0 720.0,417.5C721.5,436.0 725.0,446.0 731.5,450.7Q736.0,454.0 742.5,456.6L741.0,581.8L739.2,763.9L622.5,763.9L620.6,581.8L619.2,417.5C619.2,385.0 623.0,352.0 630.1,330.7Z" fill="#f2e9cd" stroke="#52b0ee" stroke-width="2.4"/><path d="M681.0,374.1L681.0,763.9M619.2,417.5L720.0,417.5M619.5,443.8L720.6,443.8M619.8,456.6L742.5,456.6M720.6,417.5L720.6,456.6M720.6,456.6L731.5,450.7M620.6,581.8L741.0,581.8" fill="none" stroke="#88709f" stroke-width="0.95" stroke-dasharray="2.4 2"/><circle cx="630.1" cy="330.7" r="1.7" fill="#26282a"/><circle cx="675.3" cy="328.6" r="1.7" fill="#26282a"/><circle cx="681.0" cy="374.1" r="1.7" fill="#26282a"/><circle cx="686.8" cy="328.6" r="1.7" fill="#26282a"/><circle cx="717.8" cy="329.9" r="1.7" fill="#26282a"/><circle cx="720.0" cy="417.5" r="1.7" fill="#26282a"/><circle cx="731.5" cy="450.7" r="1.7" fill="#26282a"/><circle cx="742.5" cy="456.6" r="1.7" fill="#26282a"/><circle cx="741.0" cy="581.8" r="1.7" fill="#26282a"/><circle cx="739.2" cy="763.9" r="1.7" fill="#26282a"/><circle cx="681.0" cy="763.9" r="1.7" fill="#26282a"/><circle cx="622.5" cy="763.9" r="1.7" fill="#26282a"/><circle cx="619.2" cy="417.5" r="1.7" fill="#26282a"/><path d="M888.6,330.7Q866.7,330.2 843.4,328.6L837.7,374.1L831.9,328.6Q816.7,328.8 800.9,329.9C799.2,360.0 799.4,395.0 798.7,417.5C797.2,436.0 793.7,446.0 787.2,450.7Q782.7,454.0 776.2,456.6L777.7,581.8L779.5,763.9L896.2,763.9L898.1,581.8L899.5,417.5C899.5,385.0 895.7,352.0 888.6,330.7Z" fill="none" stroke="#82aedb" stroke-width="10" stroke-linejoin="bevel"/><path d="M888.6,330.7Q866.7,330.2 843.4,328.6L837.7,374.1L831.9,328.6Q816.7,328.8 800.9,329.9C799.2,360.0 799.4,395.0 798.7,417.5C797.2,436.0 793.7,446.0 787.2,450.7Q782.7,454.0 776.2,456.6L777.7,581.8L779.5,763.9L896.2,763.9L898.1,581.8L899.5,417.5C899.5,385.0 895.7,352.0 888.6,330.7Z" fill="#f2e9cd" stroke="#2a2c2e" stroke-width="1.1"/><path d="M837.7,374.1L837.7,763.9M899.5,417.5L798.7,417.5M899.2,443.8L798.1,443.8M898.9,456.6L776.2,456.6M798.1,417.5L798.1,456.6M798.1,456.6L787.2,450.7M898.1,581.8L777.7,581.8" fill="none" stroke="#88709f" stroke-width="0.95" stroke-dasharray="2.4 2"/><circle cx="888.6" cy="330.7" r="1.7" fill="#26282a"/><circle cx="843.4" cy="328.6" r="1.7" fill="#26282a"/><circle cx="837.7" cy="374.1" r="1.7" fill="#26282a"/><circle cx="831.9" cy="328.6" r="1.7" fill="#26282a"/><circle cx="800.9" cy="329.9" r="1.7" fill="#26282a"/><circle cx="798.7" cy="417.5" r="1.7" fill="#26282a"/><circle cx="787.2" cy="450.7" r="1.7" fill="#26282a"/><circle cx="776.2" cy="456.6" r="1.7" fill="#26282a"/><circle cx="777.7" cy="581.8" r="1.7" fill="#26282a"/><circle cx="779.5" cy="763.9" r="1.7" fill="#26282a"/><circle cx="837.7" cy="763.9" r="1.7" fill="#26282a"/><circle cx="896.2" cy="763.9" r="1.7" fill="#26282a"/><circle cx="899.5" cy="417.5" r="1.7" fill="#26282a"/><path d="M979.1,339.6Q996.0,338.0 1012.2,335.7L1019.9,396.0L1032.1,336.5Q1048.0,337.4 1064.6,337.3C1066.0,370.0 1067.0,400.0 1069.1,425.9C1072.0,452.0 1088.0,467.0 1114.1,468.8C1107.0,505.0 1100.5,550.0 1098.8,590.3L1097.2,772.4L971.7,772.4L969.8,590.3L968.0,425.9C968.3,395.0 972.0,365.0 979.1,339.6Z" fill="none" stroke="#82aedb" stroke-width="10" stroke-linejoin="bevel"/><path d="M979.1,339.6Q996.0,338.0 1012.2,335.7L1019.9,396.0L1032.1,336.5Q1048.0,337.4 1064.6,337.3C1066.0,370.0 1067.0,400.0 1069.1,425.9C1072.0,452.0 1088.0,467.0 1114.1,468.8C1107.0,505.0 1100.5,550.0 1098.8,590.3L1097.2,772.4L971.7,772.4L969.8,590.3L968.0,425.9C968.3,395.0 972.0,365.0 979.1,339.6Z" fill="#f2e9cd" stroke="#2a2c2e" stroke-width="1.1"/><path d="M1034.7,337.0L1034.7,772.4M968.0,425.9L1069.1,425.9M968.5,464.8L1071.2,464.8M1071.2,425.9L1071.2,468.8M1071.2,468.8L1114.1,468.8M969.8,590.3L1098.8,590.3" fill="none" stroke="#88709f" stroke-width="0.95" stroke-dasharray="2.4 2"/><circle cx="979.1" cy="339.6" r="1.7" fill="#26282a"/><circle cx="1012.2" cy="335.7" r="1.7" fill="#26282a"/><circle cx="1019.9" cy="396.0" r="1.7" fill="#26282a"/><circle cx="1032.1" cy="336.5" r="1.7" fill="#26282a"/><circle cx="1064.6" cy="337.3" r="1.7" fill="#26282a"/><circle cx="1069.1" cy="425.9" r="1.7" fill="#26282a"/><circle cx="1114.1" cy="468.8" r="1.7" fill="#26282a"/><circle cx="1098.8" cy="590.3" r="1.7" fill="#26282a"/><circle cx="1097.2" cy="772.4" r="1.7" fill="#26282a"/><circle cx="1034.4" cy="772.4" r="1.7" fill="#26282a"/><circle cx="971.7" cy="772.4" r="1.7" fill="#26282a"/><circle cx="968.0" cy="425.9" r="1.7" fill="#26282a"/><path d="M1265.5,336.3Q1248.6,334.7 1232.4,332.4L1224.7,392.7L1212.5,333.2Q1196.6,334.1 1180.0,334.0C1178.6,366.7 1177.6,396.7 1175.5,422.6C1172.6,448.7 1156.6,463.7 1130.5,465.5C1137.6,501.7 1144.1,546.7 1145.8,587.0L1147.4,769.1L1272.9,769.1L1274.8,587.0L1276.6,422.6C1276.3,391.7 1272.6,361.7 1265.5,336.3Z" fill="none" stroke="#82aedb" stroke-width="10" stroke-linejoin="bevel"/><path d="M1265.5,336.3Q1248.6,334.7 1232.4,332.4L1224.7,392.7L1212.5,333.2Q1196.6,334.1 1180.0,334.0C1178.6,366.7 1177.6,396.7 1175.5,422.6C1172.6,448.7 1156.6,463.7 1130.5,465.5C1137.6,501.7 1144.1,546.7 1145.8,587.0L1147.4,769.1L1272.9,769.1L1274.8,587.0L1276.6,422.6C1276.3,391.7 1272.6,361.7 1265.5,336.3Z" fill="#f2e9cd" stroke="#2a2c2e" stroke-width="1.1"/><path d="M1209.9,333.7L1209.9,769.1M1276.6,422.6L1175.5,422.6M1276.1,461.5L1173.4,461.5M1173.4,422.6L1173.4,465.5M1173.4,465.5L1130.5,465.5M1274.8,587.0L1145.8,587.0" fill="none" stroke="#88709f" stroke-width="0.95" stroke-dasharray="2.4 2"/><circle cx="1265.5" cy="336.3" r="1.7" fill="#26282a"/><circle cx="1232.4" cy="332.4" r="1.7" fill="#26282a"/><circle cx="1224.7" cy="392.7" r="1.7" fill="#26282a"/><circle cx="1212.5" cy="333.2" r="1.7" fill="#26282a"/><circle cx="1180.0" cy="334.0" r="1.7" fill="#26282a"/><circle cx="1175.5" cy="422.6" r="1.7" fill="#26282a"/><circle cx="1130.5" cy="465.5" r="1.7" fill="#26282a"/><circle cx="1145.8" cy="587.0" r="1.7" fill="#26282a"/><circle cx="1147.4" cy="769.1" r="1.7" fill="#26282a"/><circle cx="1210.2" cy="769.1" r="1.7" fill="#26282a"/><circle cx="1272.9" cy="769.1" r="1.7" fill="#26282a"/><circle cx="1276.6" cy="422.6" r="1.7" fill="#26282a"/></g><rect x="612" y="26" width="32" height="156" rx="6.5" fill="#505050"/><path d="M618.1,52.9L628.7,40.4Q630.6,38.6 632.2,39.1Q633,39.8 631.9,41.4Z" fill="#e9e9ee"/><ellipse cx="629.8" cy="41.8" rx="1" ry="0.5" transform="rotate(-45 629.8 41.8)" fill="#3d4f8c"/><linearGradient id="thg" x1="0" y1="39" x2="0" y2="50" gradientUnits="userSpaceOnUse"><stop offset="0" stop-color="#9ad8ec"/><stop offset="0.5" stop-color="#5aa4dc"/><stop offset="1" stop-color="#4a7fd4"/></linearGradient><path d="M631.9,40.1C634.2,39.8 635.5,41.6 635.2,44.2C634.9,46.6 634,48.2 635.3,49C636.2,49.5 637,49.4 637.7,49" fill="none" stroke="url(#thg)" stroke-width="2" stroke-linecap="round"/><linearGradient id="tsg" x1="0" y1="0" x2="0" y2="1"><stop offset="0" stop-color="#ffffff"/><stop offset="0.35" stop-color="#f4f4f6"/><stop offset="1" stop-color="#d2d2d6"/></linearGradient><path transform="translate(628,76)" d="M-2.6,-8 Q-0.1,-3.2 2.5,-8 L5.5,-6.8 L9.3,-1.9 L7.5,0.7 L5.2,-1.3 L5,8 L-5,8 L-5.1,-1.3 L-7.5,0.7 L-9.3,-1.9 L-5.6,-6.8Z" fill="url(#tsg)"/><radialGradient id="ig" cx="0.45" cy="0.35" r="0.75"><stop offset="0" stop-color="#f0f0f4"/><stop offset="0.7" stop-color="#e0e0e4"/><stop offset="1" stop-color="#c4c4c8"/></radialGradient><circle cx="627.8" cy="105.9" r="8.5" fill="url(#ig)"/><circle cx="628.9" cy="101.3" r="1.5" fill="#2a62d0"/><path d="M625.3,104.2L629.8,104.2L628.5,109.8Q628.2,111 630,110.9L629.8,111.9L626.6,111.9Q625.5,111.6 625.8,110.3L626.9,105.5L625.2,105.3Z" fill="#2f68d8"/><linearGradient id="fbg" x1="0" y1="0" x2="1" y2="0"><stop offset="0" stop-color="#0b78e8"/><stop offset="0.4" stop-color="#0a90fc"/><stop offset="0.68" stop-color="#33dcff"/><stop offset="0.85" stop-color="#1aa4f4"/><stop offset="1" stop-color="#0a6cd6"/></linearGradient><linearGradient id="fsg" x1="0" y1="0" x2="0" y2="1"><stop offset="0" stop-color="#ececf2"/><stop offset="0.7" stop-color="#d8d8e4"/><stop offset="1" stop-color="#bfb8bc"/></linearGradient><path d="M620.1,133.2L624.8,132.2L624.4,140L632.4,141.6Q632.6,143 631.4,143.4Q626,144 621.4,142.4Z" fill="url(#fsg)"/><path d="M626.2,128.4Q631,127.4 634.6,127.9Q635.8,128.2 635.5,129.4L633.5,141.7Q628.5,141.4 623.4,139.7Z" fill="url(#fbg)"/><path transform="translate(628,166)" d="M-2.6,-8 Q-0.1,-3.2 2.5,-8 L5.5,-6.8 L9.3,-1.9 L7.5,0.7 L5.2,-1.3 L5,8 L-5,8 L-5.1,-1.3 L-7.5,0.7 L-9.3,-1.9 L-5.6,-6.8Z" fill="url(#tsg)"/><rect x="619.8" y="168.2" width="6.1" height="5.8" rx="0.7" fill="#5a92e2"/><path d="M621,168.6V167.5A1.8,1.9 0 0 1 624.6,167.5V168.6" fill="none" stroke="#4e88d4" stroke-width="1.2"/><circle cx="622.7" cy="171.4" r="0.8" fill="#1e3f8a"/><rect x="595.4" y="0" width="4.6" height="950" fill="#161618"/><rect x="593.1" y="17" width="2.4" height="933" fill="#1b1b1d"/><rect x="1284.4" y="14" width="8" height="936" fill="#222224"/><rect x="1287.5" y="33" width="8" height="28" rx="2.5" fill="#121212"/><rect x="1290.6" y="37" width="2" height="8" fill="#aaaaaa"/><rect x="1290.8" y="68" width="2" height="8" fill="#4a4a4c"/></svg></body></html>
